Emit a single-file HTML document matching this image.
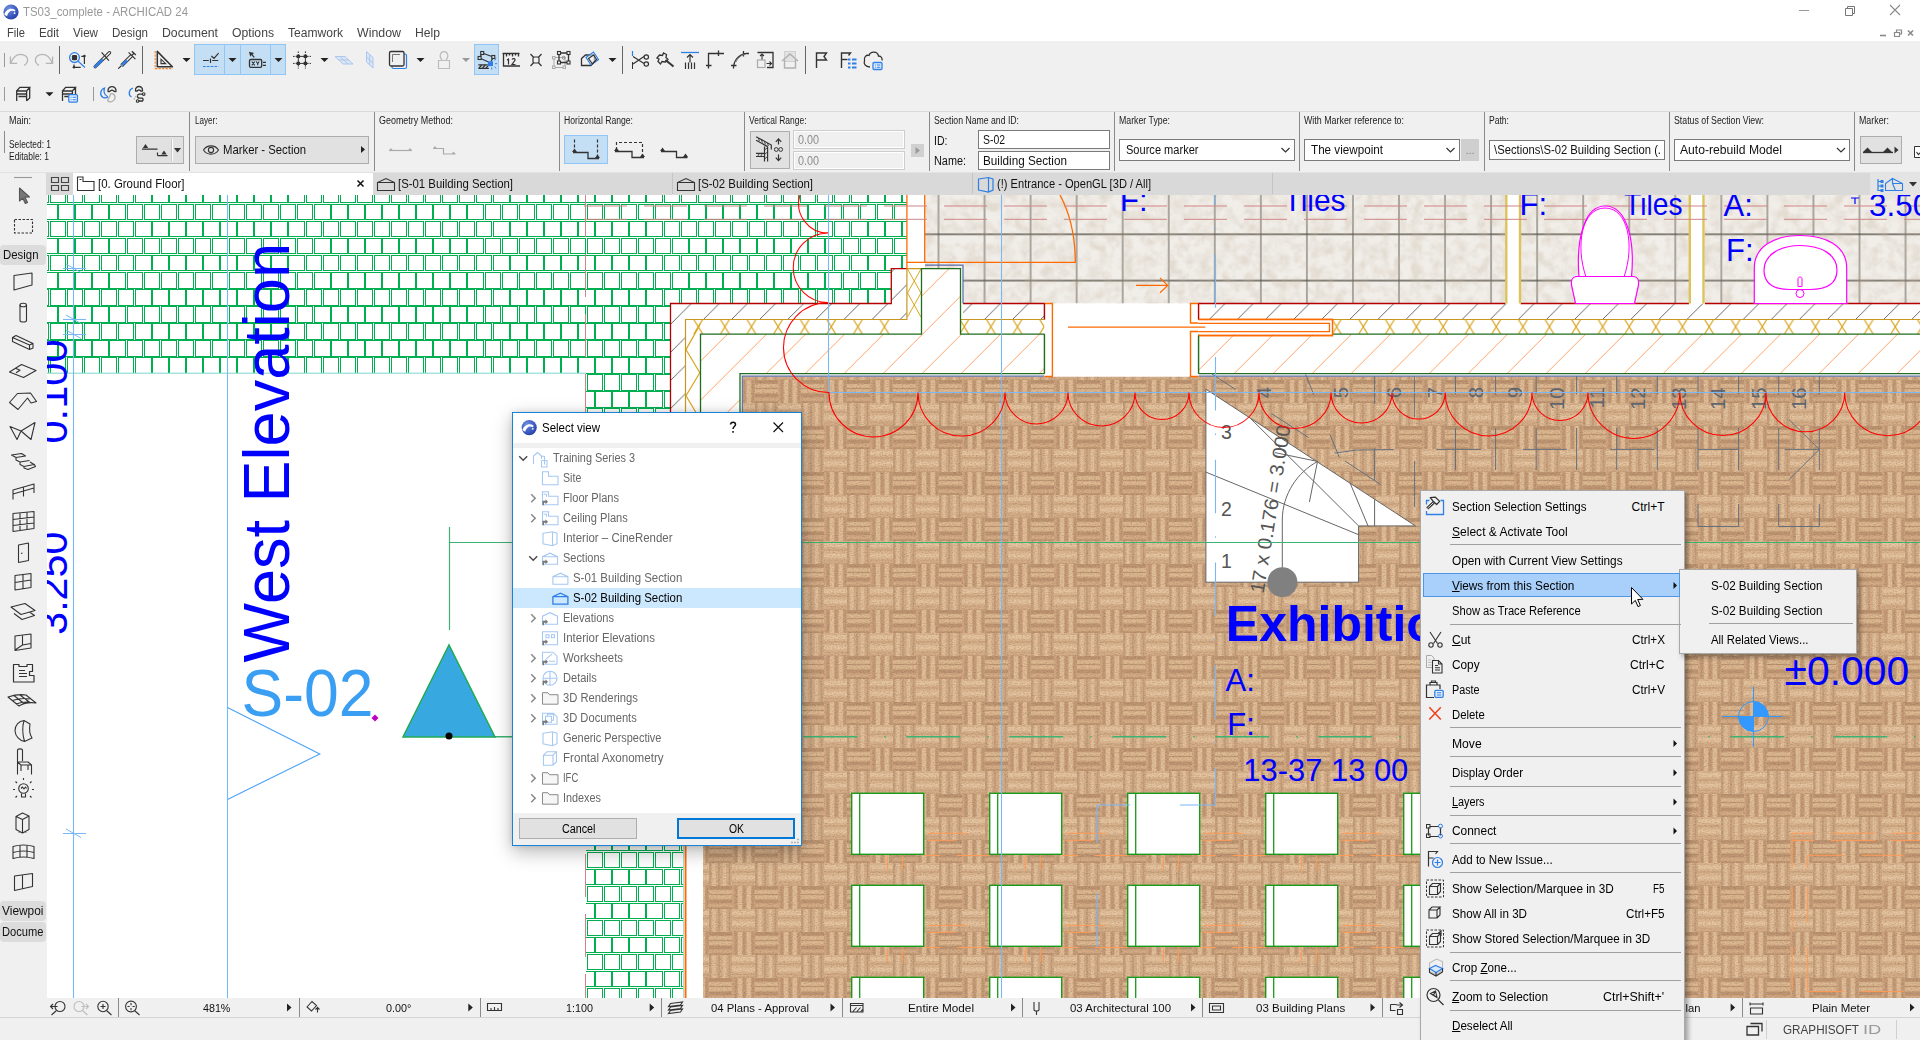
<!DOCTYPE html>
<html><head><meta charset="utf-8"><title>ARCHICAD</title>
<style>
html,body{margin:0;padding:0;background:#f0f0f0;overflow:hidden}
body{width:1920px;height:1040px;position:relative;font-family:"Liberation Sans",sans-serif;font-size:12px;color:#000}
.abs{position:absolute}
.t{position:absolute;white-space:nowrap;font-family:"Liberation Sans",sans-serif}
svg{display:block}
</style></head><body>

<div class="abs" style="left:0;top:0;width:1920px;height:41px;background:#fff"></div>
<svg class="abs" style="left:2px;top:3px" width="18" height="18" viewBox="0 0 18 18"><defs><radialGradient id="lg" cx="35%" cy="30%" r="80%"><stop offset="0" stop-color="#6f8fe0"/><stop offset="1" stop-color="#1f3aa8"/></radialGradient></defs><circle cx="9" cy="9" r="7.6" fill="url(#lg)"/><path d="M2.2 11.5 C4 6.5 9 4 13.6 7.2 L12.6 8.6 C9.5 6.6 6.2 8.4 5 13.2 Z" fill="#fff"/><circle cx="12.6" cy="10.2" r="0.9" fill="#fff"/></svg>
<span class="t" style="left:23.0px;top:4.0px;font-size:12px;line-height:16px;color:#999;transform:scaleX(0.9515);transform-origin:0 50%;">TS03_complete - ARCHICAD 24</span>
<svg class="abs" style="left:1790px;top:0" width="130" height="22" viewBox="0 0 130 22"><path d="M9 10.5h10" stroke="#999" stroke-width="1" fill="none"/><path d="M55.5 8.5h7v7h-7z M57.5 8.5v-2h7v7h-2" stroke="#777" stroke-width="1" fill="none"/><path d="M100 5l10 10M110 5l-10 10" stroke="#8a8a8a" stroke-width="1.1" fill="none"/></svg>
<span class="t" style="left:7.0px;top:25.0px;font-size:12px;line-height:16px;color:#444;transform:scaleX(0.9309);transform-origin:0 50%;">File</span>
<span class="t" style="left:39.0px;top:25.0px;font-size:12px;line-height:16px;color:#444;transform:scaleX(0.9672);transform-origin:0 50%;">Edit</span>
<span class="t" style="left:73.0px;top:25.0px;font-size:12px;line-height:16px;color:#444;transform:scaleX(0.9692);transform-origin:0 50%;">View</span>
<span class="t" style="left:112.0px;top:25.0px;font-size:12px;line-height:16px;color:#444;transform:scaleX(0.9637);transform-origin:0 50%;">Design</span>
<span class="t" style="left:162.0px;top:25.0px;font-size:12px;line-height:16px;color:#444;transform:scaleX(1.0239);transform-origin:0 50%;">Document</span>
<span class="t" style="left:232.0px;top:25.0px;font-size:12px;line-height:16px;color:#444;transform:scaleX(1.0156);transform-origin:0 50%;">Options</span>
<span class="t" style="left:288.0px;top:25.0px;font-size:12px;line-height:16px;color:#444;transform:scaleX(1.0058);transform-origin:0 50%;">Teamwork</span>
<span class="t" style="left:357.0px;top:25.0px;font-size:12px;line-height:16px;color:#444;transform:scaleX(1.0309);transform-origin:0 50%;">Window</span>
<span class="t" style="left:415.0px;top:25.0px;font-size:12px;line-height:16px;color:#444;transform:scaleX(1.0129);transform-origin:0 50%;">Help</span>
<svg class="abs" style="left:1876px;top:27px" width="44" height="12" viewBox="0 0 44 12"><path d="M4 8.5h6" stroke="#888" stroke-width="1.6"/><path d="M18.5 5.5h5v4h-5z M20.5 5v-2h5v4h-1.5" stroke="#888" stroke-width="1.2" fill="none"/><path d="M32 3.5l5 5M37 3.5l-5 5" stroke="#888" stroke-width="1.6"/></svg>
<div class="abs" style="left:0;top:41px;width:1920px;height:70px;background:#f0f0f0"></div>
<svg class="abs" style="left:0;top:0" width="1920" height="112" viewBox="0 0 1920 112" fill="none" stroke-linecap="butt">
<path d="M4.5 53v14" stroke="#999" stroke-width="1"/>
<path d="M59.5 46v28M142.5 46v28M622.5 46v28M805.5 46v28" stroke="#666" stroke-width="1"/>
<path d="M10.400 56.600V63.400H17.200" stroke="#b5b5b5" stroke-width="1.300"/><path d="M10.800 63C13 57.500 17 54.300 20.500 54.300C25 54.300 27.600 57 27.600 59.700C27.600 62.200 26 64.300 24 65.400" stroke="#b5b5b5" stroke-width="1.300"/>
<path d="M52.600 56.600V63.400H45.800" stroke="#b5b5b5" stroke-width="1.300"/><path d="M52.200 63C50 57.500 46 54.300 42.500 54.300C38 54.300 35.400 57 35.400 59.700C35.400 62.200 37 64.300 39 65.400" stroke="#b5b5b5" stroke-width="1.300"/>
<circle cx="74.500" cy="57.600" r="4.900" stroke="#2f7fe6" stroke-width="1.300"/><rect x="71.900" y="55" width="5.200" height="5.200" rx="1.300" fill="#333"/><path d="M78.200 61.200L84.900 67.500" stroke="#2f7fe6" stroke-width="1.200"/>
<path d="M84.400 56V63.900M81.300 56.300H84.400M74 67.300H80.700M74 64.500V67.300" stroke="#333" stroke-width="1.200"/><circle cx="84.400" cy="56" r="1.300" fill="#333"/><circle cx="74" cy="67.300" r="1.300" fill="#333"/>
<path d="M95.200 66.600L109.500 52.800" stroke="#333" stroke-width="3.400" stroke-linecap="round"/><path d="M95.200 66.600L109.500 52.800" stroke="#f0f0f0" stroke-width="1.400" stroke-linecap="round"/><path d="M95.300 66.500L101.800 60.200" stroke="#2f7fe6" stroke-width="2.600" stroke-linecap="round"/><path d="M101.600 52.400L108.900 60.700" stroke="#333" stroke-width="1.200"/>
<path d="M118.200 68.600L121.400 65.700" stroke="#333" stroke-width="1.200"/><path d="M121.600 65.600L132 55.300" stroke="#333" stroke-width="3.600"/><path d="M121.800 65.400L132 55.300" stroke="#f0f0f0" stroke-width="1.600"/><path d="M122 65.200L127 60.300" stroke="#2f7fe6" stroke-width="2.400"/><path d="M128.600 52.400L135.400 59.200M132.300 55L134.400 52.600M131.800 51.200L135.900 55" stroke="#333" stroke-width="1.200"/>
<path d="M157.300 51.400V66.800H172.400z" stroke="#333" stroke-width="1.500" stroke-linejoin="round"/><path d="M161 59.200V63.600H165.600z" stroke="#333" stroke-width="1.100"/><path d="M155.200 51V68.600H172.800" stroke="#f0802a" stroke-width="1.100" stroke-dasharray="2.200 1.300"/>
<path d="M182.5 58.0h8l-4 4z" fill="#222" stroke="none"/>
<rect x="194.5" y="44.500" width="91" height="30" fill="#c4def4" stroke="#90c6f5" stroke-width="1"/><path d="M224.500 44.500v30M240.500 44.500v30M270.500 44.500v30" stroke="#90c6f5" stroke-width="1"/>
<path d="M203 60.500h5.800M210.500 58.500v4.500M212.200 60.500h6M211.400 56l2.600 2.500 4.600-5.300" stroke="#333" stroke-width="1.200"/><path d="M203 66.500h15.500" stroke="#2f7fe6" stroke-width="1.200" stroke-dasharray="2.600 1.200"/>
<path d="M228.5 58.0h8l-4 4z" fill="#222" stroke="none"/>
<path d="M249 51.800l5.200 1.200-1.700 1.300 2.200 2.600-1 .8-2.200-2.600-1.300 1.700z" fill="#333" stroke="none"/><rect x="249.500" y="59.500" width="12.200" height="7.800" rx="1.300" stroke="#333" stroke-width="1.300"/><path d="M251.800 61.500l3 3.800M254.800 61.500l-3 3.800M256.200 61.500l1.500 2 1.500-2M257.700 63.500v1.800" stroke="#333" stroke-width="1.100"/><path d="M263 62.300h3M263 65.400h3" stroke="#333" stroke-width="1.200"/>
<path d="M274.5 58.0h8l-4 4z" fill="#222" stroke="none"/>
<path d="M293 56.400h4M307 56.400h4M293 63.400h4M307 63.400h4M298.300 51.400v3.500M298.300 65v3.600M305.400 51.400v3.500M305.400 65v3.600" stroke="#333" stroke-width="1" stroke-dasharray="1.600 1"/><path d="M298.300 56.400h7.100M298.300 63.400h7.100M298.300 56.400v7M305.400 56.400v7" stroke="#333" stroke-width="1"/><path d="M296.600 54.700h3.400v3.400h-3.400zM303.700 54.700h3.400v3.400h-3.400zM296.600 61.700h3.400v3.400h-3.400zM303.700 61.700h3.400v3.400h-3.400z" fill="#333"/>
<path d="M320.5 58.0h8l-4 4z" fill="#222" stroke="none"/>
<path d="M335 56.500h10l8 7.500h-10zM340 56.500l8 7.500M339 60h10" stroke="#a9c7ef" stroke-width="1" fill="#dde6f2"/>
<path d="M366.500 51.500l6.500 6v10.500l-6.500-6zM369.700 54.500v10.500M366.500 57l6.500 6" stroke="#a9c7ef" stroke-width="1" fill="#dde6f2"/>
<rect x="392" y="54" width="14.500" height="14.500" rx="1.500" stroke="#2f7fe6" stroke-width="1.200"/><rect x="389.500" y="51.500" width="14.500" height="14.500" rx="1.500" stroke="#333" stroke-width="1.300" fill="#f0f0f0"/><path d="M392.500 62v-7.500h7.500" stroke="#777" stroke-width="1"/>
<path d="M416.5 58.0h8l-4 4z" fill="#222" stroke="none"/>
<path d="M438.500 60.500h11v8h-11z" stroke="#bdbdbd" stroke-width="1.200"/><path d="M442 60C438.800 57 440 51.700 444 51.700C448 51.700 449.200 57 446 60" stroke="#bdbdbd" stroke-width="1.200"/>
<path d="M462.0 58.0h8l-4 4z" fill="#999" stroke="none"/>
<rect x="474.500" y="44.500" width="24" height="30" fill="#c4def4" stroke="#90c6f5" stroke-width="1"/>
<path d="M482.200 53L493.300 57L491 61.500M482.200 53L479.600 58L488.500 62" stroke="#333" stroke-width="1.200"/><g fill="#c4def4" stroke="#333" stroke-width="1.100"><rect x="480.700" y="51.500" width="3" height="3"/><rect x="491.800" y="55.500" width="3" height="3"/><rect x="478.100" y="56.500" width="3" height="3"/></g><rect x="488" y="61.300" width="5" height="4.800" fill="#2f7fe6"/><path d="M478.300 64.800h9.500M478.300 68.300h10.500" stroke="#333" stroke-width="1.300"/><path d="M479 68l2.800-3M482.500 68l2.800-3M486 68l2-2.200" stroke="#333" stroke-width="1.200"/><path d="M494.500 60.300l1.700-1.600M495 63.700h2M494.500 66.800l1.700 1.600M491.500 67.500l.3 2" stroke="#2f7fe6" stroke-width="1"/>
<path d="M502.500 53.500h17M503.500 53.500v12.500h16.500M506.500 53.500v3M509.500 53.500v2M512.500 53.500v3M515.500 53.500v2M518.500 53.500v3" stroke="#333" stroke-width="1.300"/><path d="M507 60l1.500-1v5.500M512 59.500c1-1.500 3.500-1 3 .8l-3 4.200h3.500" stroke="#333" stroke-width="1.200"/>
<path d="M530.500 54l11 12M541.500 54l-11 12" stroke="#333" stroke-width="1.200"/><rect x="533" y="57" width="6" height="6" rx="1.500" fill="#f0f0f0" stroke="#333" stroke-width="1.200"/>
<path d="M554 57.500h11v10h-11z" stroke="#aaa" stroke-width="1"/><rect x="552.500" y="56.500" width="2.500" height="2.500" stroke="#aaa" fill="#f0f0f0"/><rect x="552.500" y="66" width="2.500" height="2.500" stroke="#aaa" fill="#f0f0f0"/><rect x="563" y="66" width="2.500" height="2.500" stroke="#aaa" fill="#f0f0f0"/>
<path d="M559 53h9.500v9.500h-9.500z" stroke="#333" stroke-width="1.300"/><g fill="#f0f0f0" stroke="#333" stroke-width="1.100"><rect x="557.500" y="51.500" width="3" height="3"/><rect x="567" y="51.500" width="3" height="3"/><rect x="557.500" y="61" width="3" height="3"/><rect x="567" y="61" width="3" height="3"/></g><circle cx="563.700" cy="57.700" r="1.500" stroke="#888" stroke-width="1"/>
<path d="M581.500 58.500l4-3.500h9v6l-3.500 4.500h-9.500z" stroke="#333" stroke-width="1.300"/><path d="M586 57.500l7.500-5.500 5 7.500-7.500 5.500z" stroke="#2f7fe6" stroke-width="1.200" fill="#f0f0f0" fill-opacity=".6"/><path d="M588.500 58.500l5-3.500 3 4.500-4 4.500z" stroke="#333" stroke-width="1.200"/>
<path d="M608.5 58.0h8l-4 4z" fill="#222" stroke="none"/>
<path d="M632.500 51v5M632.500 62v7" stroke="#333" stroke-width="1"/><path d="M632.500 51v5" stroke="#2f7fe6" stroke-width="1.200"/><path d="M633 56.500l11 7M633 64l11-7.500" stroke="#333" stroke-width="1.200"/><circle cx="646.300" cy="57" r="2.200" stroke="#333" stroke-width="1.200"/><circle cx="646.300" cy="64" r="2.200" stroke="#333" stroke-width="1.200"/>
<path d="M657 58l2.500-3 3 .5 1-2.500 3 1.500-.5 3 2 2-2.500 2.500-3.500-.5-1.500 2.500-2.500-2.500 1-2.500z" stroke="#333" stroke-width="1.300"/><path d="M665.500 60l8 6.500" stroke="#333" stroke-width="2"/>
<path d="M681 52.500h18" stroke="#2f7fe6" stroke-width="1.300"/><path d="M690 54.500v8M687 57.500l3-3 3 3" stroke="#333" stroke-width="1.200"/><path d="M685.500 62.500v6.500M688.500 62.500v6.500M691.500 62.500v6.500M694.500 62.500v6.500" stroke="#333" stroke-width="1.200"/>
<path d="M708.500 68.500v-15h15.500M718.500 50.500v5.500M706 65.500h5.500" stroke="#333" stroke-width="1.300"/>
<path d="M733.500 68.500c0-8 5-14 13-15M743.500 51v5.500M731 65.500h5.500M746 53.500h3" stroke="#333" stroke-width="1.300"/><path d="M736 62c1.500-3.500 4-6 8-7.500" stroke="#888" stroke-width="1"/>
<path d="M757.500 52.500h15.500v15h-6" stroke="#333" stroke-width="1.300"/><rect x="757.500" y="60" width="7.500" height="7.500" stroke="#aaa" stroke-width="1.200"/><path d="M762 59.500v-5.500M760 56l2-2 2 2M766.500 63.500h5M769.500 61.500l2 2-2 2" stroke="#333" stroke-width="1.100"/>
<rect x="784.500" y="51.500" width="11" height="10" fill="#e2e2e2" stroke="#d0d0d0"/><path d="M782 61l8-7 8 7M784.500 60v8h11v-8" stroke="#b0b0b0" stroke-width="1.400"/>
<path d="M816.500 68v-15h10l-2.500 3.500 2.500 3.500h-10" stroke="#333" stroke-width="1.400"/>
<path d="M841.500 68v-15h9l-2 2.500" stroke="#333" stroke-width="1.400"/><path d="M841.500 59.500h6" stroke="#333" stroke-width="1.400"/><path d="M848 59.500h2.500M852 59.500h4.500M848 63.500h2.500M852 63.500h4.500M848 67.500h2.500M852 67.500h4.500" stroke="#2f7fe6" stroke-width="2"/>
<path d="M870 67c-5 0-6.500-3.500-5.500-6-1-4 2-6.500 4.500-5.500 1.500-4.500 8.500-4.500 9.500.5 3 0 4 2.500 3.500 4.500" stroke="#333" stroke-width="1.300"/><rect x="873" y="62.500" width="9" height="7" rx="1" fill="#e9f1fc" stroke="#2f7fe6" stroke-width="1.300"/><path d="M874.800 65h1M876.800 65h3.500M874.800 67.300h1M876.800 67.300h3.500" stroke="#2f7fe6" stroke-width="1.100"/>
<path d="M4.500 87v14M93.500 87v14" stroke="#999" stroke-width="1"/>
<path d="M16.7 100.900V91H26.6V100.900M16.7 91L19.8 87.300H29.7L26.6 91M29.7 87.300V98L26.6 100.900M16.7 94H26.6M18.5 96.500H26.6" stroke="#333" stroke-width="1.300"/>
<path d="M45.5 92.2h8l-4 4z" fill="#222" stroke="none"/>
<path d="M62.5 100.900V91H72.4V100.900M62.5 91L65.6 87.300H75.5L72.4 91M75.5 87.300V98L72.4 100.900M62.5 94H72.4M64.3 96.500H72.4" stroke="#333" stroke-width="1.300"/>
<rect x="68.800" y="94.700" width="8.600" height="7.400" rx="1" fill="#e9f1fc" stroke="#2f7fe6" stroke-width="1.300"/><path d="M70.600 97.300h1M72.600 97.300h3.300M70.600 99.700h1M72.600 99.700h3.300" stroke="#2f7fe6" stroke-width="1.100"/>
<path d="M104.500 88C100 89.500 99.500 95.500 103 97.300C105.500 98.500 107.800 97.500 107.500 96.500C104.500 95 103.500 91.500 104.500 88z" stroke="#2f7fe6" stroke-width="1.300"/>
<path d="M108 91C107.500 85.200 116.500 85.200 116 91C115.800 92 114.500 91.800 113.500 90.800C112.500 90 111.500 90 110.500 90.800C109.500 91.800 108.200 92 108 91z" stroke="#333" stroke-width="1.300"/>
<path d="M110.500 94C113 92.800 115.500 95 115 98C114.500 101.500 110 102.800 108 101C106.500 99.500 110 98 110.500 94z" stroke="#aaa" stroke-width="1.300"/>
<path d="M133 88C128.600 89.500 128 95 131.500 97" stroke="#2f7fe6" stroke-width="1.300"/>
<path d="M135.500 90.500C135 85.200 143 85.200 142.500 90.500C142.300 91.500 141 91.300 140.300 90.500C139.500 89.700 138.500 89.700 137.700 90.500C137 91.300 135.700 91.500 135.500 90.500z" stroke="#333" stroke-width="1.300"/>
<path d="M142.300 94.100H139.500A2 2 0 0 0 139.500 98.200H142.500A1.900 1.900 0 0 1 142.500 101H139" stroke="#333" stroke-width="1.300"/><circle cx="143.700" cy="94.100" r="1.300" stroke="#333" stroke-width="1.100"/><circle cx="137.600" cy="101" r="1.300" stroke="#333" stroke-width="1.100"/><path d="M134 99.500C135 97 136.500 95.500 137.500 95" stroke="#aaa" stroke-width="1.100" stroke-dasharray="1.500 1"/>
</svg>
<div class="abs" style="left:0;top:111px;width:1920px;height:61px;background:#f0f0f0;border-top:1px solid #dadada"></div>
<div class="abs" style="left:189px;top:112px;width:1px;height:59px;background:#8a8a8a"></div>
<div class="abs" style="left:374px;top:112px;width:1px;height:59px;background:#8a8a8a"></div>
<div class="abs" style="left:559px;top:112px;width:1px;height:59px;background:#8a8a8a"></div>
<div class="abs" style="left:744px;top:112px;width:1px;height:59px;background:#8a8a8a"></div>
<div class="abs" style="left:929px;top:112px;width:1px;height:59px;background:#8a8a8a"></div>
<div class="abs" style="left:1114px;top:112px;width:1px;height:59px;background:#8a8a8a"></div>
<div class="abs" style="left:1299px;top:112px;width:1px;height:59px;background:#8a8a8a"></div>
<div class="abs" style="left:1484px;top:112px;width:1px;height:59px;background:#8a8a8a"></div>
<div class="abs" style="left:1669px;top:112px;width:1px;height:59px;background:#8a8a8a"></div>
<div class="abs" style="left:1854px;top:112px;width:1px;height:59px;background:#8a8a8a"></div>
<div class="abs" style="left:4px;top:131px;width:1px;height:22px;background:#8a8a8a"></div>
<span class="t" style="left:9.0px;top:113.5px;font-size:10px;line-height:14px;color:#222;transform:scaleX(0.8997);transform-origin:0 50%;">Main:</span>
<span class="t" style="left:194.5px;top:113.5px;font-size:10px;line-height:14px;color:#222;transform:scaleX(0.8095);transform-origin:0 50%;">Layer:</span>
<span class="t" style="left:379.0px;top:113.5px;font-size:10px;line-height:14px;color:#222;transform:scaleX(0.8936);transform-origin:0 50%;">Geometry Method:</span>
<span class="t" style="left:564.0px;top:113.5px;font-size:10px;line-height:14px;color:#222;transform:scaleX(0.8620);transform-origin:0 50%;">Horizontal Range:</span>
<span class="t" style="left:749.0px;top:113.5px;font-size:10px;line-height:14px;color:#222;transform:scaleX(0.8478);transform-origin:0 50%;">Vertical Range:</span>
<span class="t" style="left:934.0px;top:113.5px;font-size:10px;line-height:14px;color:#222;transform:scaleX(0.8689);transform-origin:0 50%;">Section Name and ID:</span>
<span class="t" style="left:1119.0px;top:113.5px;font-size:10px;line-height:14px;color:#222;transform:scaleX(0.8767);transform-origin:0 50%;">Marker Type:</span>
<span class="t" style="left:1304.0px;top:113.5px;font-size:10px;line-height:14px;color:#222;transform:scaleX(0.8864);transform-origin:0 50%;">With Marker reference to:</span>
<span class="t" style="left:1489.0px;top:113.5px;font-size:10px;line-height:14px;color:#222;transform:scaleX(0.8565);transform-origin:0 50%;">Path:</span>
<span class="t" style="left:1674.0px;top:113.5px;font-size:10px;line-height:14px;color:#222;transform:scaleX(0.8767);transform-origin:0 50%;">Status of Section View:</span>
<span class="t" style="left:1859.0px;top:113.5px;font-size:10px;line-height:14px;color:#222;transform:scaleX(0.8851);transform-origin:0 50%;">Marker:</span>
<span class="t" style="left:9.0px;top:138.0px;font-size:10px;line-height:14px;color:#222;transform:scaleX(0.8394);transform-origin:0 50%;">Selected: 1</span>
<span class="t" style="left:9.0px;top:149.5px;font-size:10px;line-height:14px;color:#222;transform:scaleX(0.8464);transform-origin:0 50%;">Editable: 1</span>
<div class="abs" style="left:136px;top:136px;width:48px;height:28px;background:#e1e1e1;border:1px solid #adadad;box-sizing:border-box"></div>
<div class="abs" style="left:195px;top:136px;width:174px;height:28px;background:#e1e1e1;border:1px solid #adadad;box-sizing:border-box"></div>
<span class="t" style="left:222.5px;top:142.0px;font-size:12px;line-height:16px;color:#111;transform:scaleX(0.9429);transform-origin:0 50%;">Marker - Section</span>
<div class="abs" style="left:564px;top:135px;width:44px;height:29px;background:#c4def4;border:1px solid #90c6f5;box-sizing:border-box"></div>
<div class="abs" style="left:750px;top:131px;width:40px;height:38px;background:#e1e1e1;border:1px solid #adadad;box-sizing:border-box"></div>
<div class="abs" style="left:793px;top:130px;width:111.5px;height:18.5px;background:#f0f0f0;box-shadow:inset 0 0 0 1px #fff;border:1px solid #cdcdcd;box-sizing:border-box"></div>
<div class="abs" style="left:793px;top:151px;width:111.5px;height:18.5px;background:#f0f0f0;box-shadow:inset 0 0 0 1px #fff;border:1px solid #cdcdcd;box-sizing:border-box"></div>
<span class="t" style="left:797.5px;top:132.0px;font-size:12px;line-height:16px;color:#8c8c8c;transform:scaleX(0.8991);transform-origin:0 50%;">0.00</span>
<span class="t" style="left:797.5px;top:153.0px;font-size:12px;line-height:16px;color:#8c8c8c;transform:scaleX(0.8991);transform-origin:0 50%;">0.00</span>
<div class="abs" style="left:911px;top:144px;width:13px;height:13px;background:#d0d0d0;border:1px solid #d0d0d0;box-sizing:border-box"></div>
<span class="t" style="left:934.0px;top:132.5px;font-size:12px;line-height:16px;color:#111;transform:scaleX(0.8804);transform-origin:0 50%;">ID:</span>
<span class="t" style="left:934.0px;top:153.0px;font-size:12px;line-height:16px;color:#111;transform:scaleX(0.9054);transform-origin:0 50%;">Name:</span>
<div class="abs" style="left:978px;top:130px;width:132px;height:19px;background:#fff;border:1px solid #7a7a7a;box-sizing:border-box"></div>
<div class="abs" style="left:978px;top:151px;width:132px;height:19px;background:#fff;border:1px solid #7a7a7a;box-sizing:border-box"></div>
<span class="t" style="left:982.5px;top:132.0px;font-size:12px;line-height:16px;color:#111;transform:scaleX(0.8679);transform-origin:0 50%;">S-02</span>
<span class="t" style="left:982.5px;top:153.0px;font-size:12px;line-height:16px;color:#111;transform:scaleX(0.9761);transform-origin:0 50%;">Building Section</span>
<div class="abs" style="left:1119px;top:139px;width:175.5px;height:22px;background:#fff;border:1px solid #7a7a7a;box-sizing:border-box"></div>
<span class="t" style="left:1126.0px;top:142.0px;font-size:12px;line-height:16px;color:#111;transform:scaleX(0.9213);transform-origin:0 50%;">Source marker</span>
<div class="abs" style="left:1304px;top:139px;width:155.5px;height:22px;background:#fff;border:1px solid #7a7a7a;box-sizing:border-box"></div>
<span class="t" style="left:1311.0px;top:142.0px;font-size:12px;line-height:16px;color:#111;transform:scaleX(0.9724);transform-origin:0 50%;">The viewpoint</span>
<div class="abs" style="left:1461px;top:139px;width:18px;height:22px;background:#cfcfcf;border:1px solid #cfcfcf;box-sizing:border-box"></div>
<span class="t" style="left:1465.5px;top:142.5px;font-size:11px;line-height:15px;color:#888;">...</span>
<div class="abs" style="left:1489px;top:140px;width:175.5px;height:19.5px;background:#fff;border:1px solid #7a7a7a;box-sizing:border-box"></div>
<span class="t" style="left:1494.0px;top:142.0px;font-size:12px;line-height:16px;color:#111;transform:scaleX(0.9377);transform-origin:0 50%;white-space:pre;">\Sections\S-02 Building Section (.</span>
<div class="abs" style="left:1674px;top:139px;width:175.5px;height:22px;background:#fff;border:1px solid #7a7a7a;box-sizing:border-box"></div>
<span class="t" style="left:1680.0px;top:142.0px;font-size:12px;line-height:16px;color:#111;transform:scaleX(1.0126);transform-origin:0 50%;">Auto-rebuild Model</span>
<div class="abs" style="left:1860px;top:136px;width:42px;height:28px;background:#e1e1e1;border:1px solid #adadad;box-sizing:border-box"></div>
<svg class="abs" style="left:0;top:111px" width="1920" height="62" viewBox="0 111 1920 62" fill="none">
<path d="M172.500 139v22" stroke="#fdfdfd"/><path d="M171.500 139v22" stroke="#c8c8c8"/><path d="M142 149.200h15.500M157.500 155.700h10M157.500 152.500v3" stroke="#333" stroke-width="1.200"/><path d="M142.800 148l2.700-4 2.700 4zM161.300 154.500l2.700-4 2.700 4z" fill="#333"/><path d="M174 148h7l-3.500 4.500z" fill="#333"/>
<path d="M203.500 150c3.500-5.500 11.500-5.500 15 0-3.500 5.500-11.500 5.500-15 0z" stroke="#333" stroke-width="1.100"/><circle cx="211" cy="150" r="2.600" stroke="#333" stroke-width="1.100"/>
<path d="M361 146l4 3.500-4 3.500z" fill="#222"/>
<path d="M389 150.500h23" stroke="#aaa" stroke-width="1.200"/><path d="M389 150.500l2-2.500 2 2.500zM408 150.500l2-2.500 2 2.500z" fill="#aaa"/>
<path d="M433 148.500h10.500v5.500h12" stroke="#aaa" stroke-width="1.200"/><path d="M433 148.500l2-2.500 2 2.500zM451.500 154l2-2.500 2 2.500z" fill="#aaa"/>
<path d="M574.500 139.500v11M597.500 139.500v18" stroke="#333" stroke-width="1.200" stroke-dasharray="3 2"/><path d="M573 152.500h15v6h11" stroke="#333" stroke-width="1.300"/><path d="M572 152l2.500-3.500 2.500 3.500zM595 158l2.500-3.500 2.500 3.500z" fill="#333"/>
<path d="M616.500 150v-7.500h26v14" stroke="#333" stroke-width="1.200" stroke-dasharray="3 2"/><path d="M615 151.500h17v6h12" stroke="#333" stroke-width="1.300"/><path d="M614 151l2.500-3.500 2.500 3.500zM640 157l2.500-3.500 2.500 3.500z" fill="#333"/>
<path d="M661 151.500h15.500v6h11" stroke="#333" stroke-width="1.300"/><path d="M660 151l2.500-3.500 2.500 3.500zM683 157l2.500-3.500 2.500 3.500z" fill="#333"/>
<path d="M756.100 136.700L771.300 145V149.500M756.100 140.300L767.600 146.600M764.500 146.500V161.500M767.600 146.600V161.500M756 153.300H764.500M756 156.500H764.500" stroke="#333" stroke-width="1.200"/><path d="M758.500 138l.8 3M761.500 139.700l.8 3M764.500 141.300l.8 3M767.500 143l.8 3M764.500 150l3-2.500M764.500 154.500l3-2.500M764.500 159l3-2.500M757.500 156.500l2-3.200M760.500 156.500l2-3.200" stroke="#333" stroke-width=".9"/>
<path d="M778.500 139V144.500M775.800 141.800L778.500 138.800L781.200 141.800M778.500 154.400V160.400M775.800 157.600L778.500 160.600L781.200 157.600" stroke="#333" stroke-width="1.200"/><circle cx="776.300" cy="149.500" r="1.900" stroke="#333" stroke-width="1"/><circle cx="780.700" cy="149.500" r="1.900" stroke="#333" stroke-width="1"/>
<path d="M915.500 147l4.500 3.500-4.500 3.500z" fill="#999"/>
<path d="M1281.5 148l4 4 4-4" stroke="#333" stroke-width="1.200"/>
<path d="M1446.5 148l4 4 4-4" stroke="#333" stroke-width="1.200"/>
<path d="M1837 148l4 4 4-4" stroke="#333" stroke-width="1.200"/>
<path d="M1863 152.500h30" stroke="#333" stroke-width="1.300"/><path d="M1863 152l4.500-4.500 4.500 4.500zM1883 152l4.500-4.500 4.500 4.500z" fill="#333"/><path d="M1894.500 146.500l4 3.500-4 3.500z" fill="#333"/>
<path d="M1914.500 146.500h6v11h-6z" stroke="#333" fill="#fff"/><path d="M1916.500 152l2 2.500 2-2" stroke="#333" stroke-width="1.200"/>
</svg>
<div class="abs" style="left:0;top:172px;width:1920px;height:1px;background:#e2e2e2"></div>
<div class="abs" style="left:0;top:173px;width:1920px;height:22px;background:#d9d9d9"></div>
<div class="abs" style="left:0;top:173px;width:46px;height:870px;background:#f0f0f0"></div>
<div class="abs" style="left:73px;top:173px;width:300px;height:22px;background:#fff"></div>
<div class="abs" style="left:1870px;top:173px;width:50px;height:22px;background:#e4e4e4"></div>
<div class="abs" style="left:672px;top:173px;width:1px;height:21px;background:#c4c4c4"></div>
<div class="abs" style="left:972px;top:173px;width:1px;height:21px;background:#c4c4c4"></div>
<div class="abs" style="left:1272px;top:173px;width:1px;height:21px;background:#c4c4c4"></div>
<span class="t" style="left:97.5px;top:175.5px;font-size:12px;line-height:16px;color:#111;transform:scaleX(0.9536);transform-origin:0 50%;">[0. Ground Floor]</span>
<span class="t" style="left:397.5px;top:175.5px;font-size:12px;line-height:16px;color:#111;transform:scaleX(0.9472);transform-origin:0 50%;">[S-01 Building Section]</span>
<span class="t" style="left:697.5px;top:175.5px;font-size:12px;line-height:16px;color:#111;transform:scaleX(0.9472);transform-origin:0 50%;">[S-02 Building Section]</span>
<span class="t" style="left:997.0px;top:175.5px;font-size:12px;line-height:16px;color:#111;transform:scaleX(0.9261);transform-origin:0 50%;">(!) Entrance - OpenGL [3D / All]</span>
<svg class="abs" style="left:0;top:172px" width="1920" height="23" viewBox="0 172 1920 23" fill="none">
<path d="M51.500 177.500h7v5h-7zM61.500 177.500h7v5h-7zM51.500 185.500h7v5h-7zM61.500 185.500h7v5h-7z" stroke="#444" stroke-width="1.100"/>
<path d="M77.500 190.500v-13.500h5.500v4.500h11v9z" stroke="#333" stroke-width="1.100"/><path d="M79.500 179.500h2" stroke="#333" stroke-width="1"/>
<path d="M357.500 180.500l6 6M363.500 180.500l-6 6" stroke="#111" stroke-width="1.500"/>
<path d="M377.5 190.500v-8l8.500-4 8.500 4v8zM377.5 182.500h17" stroke="#333" stroke-width="1.100"/>
<path d="M677.5 190.500v-8l8.500-4 8.500 4v8zM677.5 182.500h17" stroke="#333" stroke-width="1.100"/>
<path d="M978.500 179l10-1.500 4.500 1.500v11l-4.500 2-10-2zM988.500 177.500v14.500" stroke="#2f7fe6" stroke-width="1.200"/>
<path d="M1878 179v12M1878 181.500h4M1878 186h4M1878 190.500h4" stroke="#2f7fe6" stroke-width="1.200"/><path d="M1880.500 180h3v3h-3zM1880.500 184.500h3v3h-3zM1880.500 189h3v3h-3z" fill="#2f7fe6"/><path d="M1885.500 190.500v-7l7-5 10 5v7zM1892.500 178.500v5M1892.500 183.500l3 7M1892.500 183.500h10" stroke="#2f7fe6" stroke-width="1.100"/>
<path d="M1909 182h8l-4 4.500z" fill="#333"/>
</svg>
<svg class="abs" style="left:47px;top:195px;background:#fff" width="1873" height="803" viewBox="47 195 1873 803" fill="none" font-family="Liberation Sans, sans-serif">
<defs>
<pattern id="brick" patternUnits="userSpaceOnUse" x="101" y="187" width="17" height="34">
<rect width="17" height="34" fill="#fff"/>
<g stroke="#00b050" stroke-width="1" fill="none" shape-rendering="crispEdges"><rect x=".5" y=".5" width="15" height="15"/><rect x="9.500" y="17.500" width="15" height="15"/><rect x="-7.500" y="17.500" width="15" height="15"/></g>
</pattern>
<pattern id="brick2" patternUnits="userSpaceOnUse" x="101" y="189" width="17" height="34">
<rect width="17" height="34" fill="#fff"/>
<g stroke="#00b050" stroke-width="1" fill="none" shape-rendering="crispEdges"><rect x=".5" y=".5" width="15" height="15"/><rect x="9.500" y="17.500" width="15" height="15"/><rect x="-7.500" y="17.500" width="15" height="15"/></g>
</pattern>
<pattern id="wood" patternUnits="userSpaceOnUse" x="42" y="12" width="46" height="46">
<rect width="46" height="46" fill="#d3aa84"/>
<rect x="0" y="0" width="23" height="23" fill="#d2a984"/>
<path d="M8 0v23M16.800 0v23" stroke="#e1bf99" stroke-width="4"/><path d="M3.800 0v23M12.300 0v23M21 0v23" stroke="#c39b78" stroke-width="2.800"/>
<rect x="23" y="0" width="23" height="23" fill="#cda57f"/>
<path d="M23 1.800h23" stroke="#bd9573" stroke-width="3.400"/><path d="M23 6h23M23 11h23" stroke="#deba93" stroke-width="3.600"/><path d="M23 8.500h23" stroke="#c09875" stroke-width="1"/><path d="M23 15.500h23" stroke="#bf9775" stroke-width="3"/><path d="M23 19.500h23" stroke="#d6af89" stroke-width="2.500"/><path d="M23 22.200h23" stroke="#bf9774" stroke-width="1.600"/>
<rect x="0" y="23" width="23" height="23" fill="#dbb791"/>
<path d="M0 27h23M0 37.500h23" stroke="#e5c4a0" stroke-width="4"/><path d="M0 32h23M0 42.500h23" stroke="#d1aa85" stroke-width="1.800"/><path d="M0 45.300h23" stroke="#cca580" stroke-width="1.400"/>
<rect x="23" y="23" width="23" height="23" fill="#d5af8a"/>
<path d="M28 23v23M38.500 23v23" stroke="#e2c19c" stroke-width="3.500"/><path d="M33 23v23M43.500 23v23M24 23v23" stroke="#c59e7b" stroke-width="1.600"/>
</pattern>
<filter id="grain" x="0" y="0" width="100%" height="100%" color-interpolation-filters="sRGB"><feTurbulence type="fractalNoise" baseFrequency="0.55 0.9" numOctaves="2" seed="7"/><feColorMatrix type="matrix" values="0 0 0 0 0.42  0 0 0 0 0.27  0 0 0 0 0.17  1.1 1.1 1.1 0 -1.45"/></filter>
<filter id="grain2" x="0" y="0" width="100%" height="100%" color-interpolation-filters="sRGB"><feTurbulence type="fractalNoise" baseFrequency="0.09" numOctaves="3" seed="11"/><feColorMatrix type="matrix" values="0 0 0 0 0.78  0 0 0 0 0.72  0 0 0 0 0.64  1.4 1.4 1.4 0 -1.75"/></filter>
<pattern id="tile" patternUnits="userSpaceOnUse" x="938.5" y="234.3" width="46.05" height="46.3">
<rect width="46.05" height="46.3" fill="#f1eee9"/>
<path d="M0 0v46.300M46.050 0v46.300" stroke="#6f6b62" stroke-width="1.100"/><path d="M0 0h46.050M0 46.300h46.050" stroke="#5d594f" stroke-width="1.400"/>
</pattern>
<pattern id="hg" patternUnits="userSpaceOnUse" x="1450" y="303.5" width="28.1" height="28.1"><path d="M-1 29.100l30.100-30.100M-1 1l2-2M27.100 29.100l2-2" stroke="#555" stroke-width=".9"/></pattern>
<pattern id="ho" patternUnits="userSpaceOnUse" x="1468.700" y="295" width="39" height="39"><path d="M-1 40l41-41M-1 1l2-2M38 40l2-2" stroke="#ff9a57" stroke-width=".9"/></pattern>
<pattern id="hx" patternUnits="userSpaceOnUse" x="1456.700" y="319.5" width="26.6" height="14.6"><path d="M8.500 0l9 14.600M17.500 0l-9 14.600" stroke="#d9a520" stroke-width="1.250"/></pattern>
<pattern id="hxv" patternUnits="userSpaceOnUse" x="685.5" y="300" width="15" height="26.6"><path d="M0 8.500l15 9M0 17.500l15-9" stroke="#d9a520" stroke-width="1"/></pattern>
<clipPath id="cv"><rect x="47" y="195" width="1873" height="803"/></clipPath>
<clipPath id="wc"><path d="M743 376.500H1920V998H703V500H743z"/></clipPath>
</defs>
<g clip-path="url(#cv)">
<clipPath id="bc1"><path d="M47 195H906.900V268.600H891.300V303.500H670.500V373H47z"/></clipPath>
<clipPath id="bc2"><path d="M586 373H670.500V500H683.400V998H586z"/></clipPath>
<path clip-path="url(#bc1)" d="M33.5 187.5h15v15h-15zM50.5 187.5h15v15h-15zM67.5 187.5h15v15h-15zM84.5 187.5h15v15h-15zM101.5 187.5h15v15h-15zM118.5 187.5h15v15h-15zM135.5 187.5h16v15h-16zM152.5 187.5h16v15h-16zM169.5 187.5h16v15h-16zM186.5 187.5h16v15h-16zM203.5 187.5h16v15h-16zM220.5 187.5h16v15h-16zM237.5 187.5h16v15h-16zM254.5 187.5h16v15h-16zM271.5 187.5h16v15h-16zM288.5 187.5h16v15h-16zM306.5 187.5h15v15h-15zM323.5 187.5h15v15h-15zM340.5 187.5h15v15h-15zM357.5 187.5h15v15h-15zM374.5 187.5h15v15h-15zM391.5 187.5h15v15h-15zM408.5 187.5h15v15h-15zM425.5 187.5h15v15h-15zM442.5 187.5h15v15h-15zM459.5 187.5h15v15h-15zM476.5 187.5h15v15h-15zM493.5 187.5h16v15h-16zM510.5 187.5h16v15h-16zM527.5 187.5h16v15h-16zM544.5 187.5h16v15h-16zM561.5 187.5h16v15h-16zM578.5 187.5h16v15h-16zM595.5 187.5h16v15h-16zM612.5 187.5h16v15h-16zM629.5 187.5h16v15h-16zM646.5 187.5h16v15h-16zM664.5 187.5h15v15h-15zM681.5 187.5h15v15h-15zM698.5 187.5h15v15h-15zM715.5 187.5h15v15h-15zM732.5 187.5h15v15h-15zM749.5 187.5h15v15h-15zM766.5 187.5h15v15h-15zM783.5 187.5h15v15h-15zM800.5 187.5h15v15h-15zM817.5 187.5h15v15h-15zM834.5 187.5h15v15h-15zM851.5 187.5h16v15h-16zM868.5 187.5h16v15h-16zM885.5 187.5h16v15h-16zM902.5 187.5h16v15h-16zM41.5 204.5h16v15h-16zM58.5 204.5h16v15h-16zM75.5 204.5h16v15h-16zM92.5 204.5h16v15h-16zM109.5 204.5h16v15h-16zM127.5 204.5h15v15h-15zM144.5 204.5h15v15h-15zM161.5 204.5h15v15h-15zM178.5 204.5h15v15h-15zM195.5 204.5h15v15h-15zM212.5 204.5h15v15h-15zM229.5 204.5h15v15h-15zM246.5 204.5h15v15h-15zM263.5 204.5h15v15h-15zM280.5 204.5h15v15h-15zM297.5 204.5h15v15h-15zM314.5 204.5h16v15h-16zM331.5 204.5h16v15h-16zM348.5 204.5h16v15h-16zM365.5 204.5h16v15h-16zM382.5 204.5h16v15h-16zM399.5 204.5h16v15h-16zM416.5 204.5h16v15h-16zM433.5 204.5h16v15h-16zM450.5 204.5h16v15h-16zM467.5 204.5h16v15h-16zM485.5 204.5h15v15h-15zM502.5 204.5h15v15h-15zM519.5 204.5h15v15h-15zM536.5 204.5h15v15h-15zM553.5 204.5h15v15h-15zM570.5 204.5h15v15h-15zM587.5 204.5h15v15h-15zM604.5 204.5h15v15h-15zM621.5 204.5h15v15h-15zM638.5 204.5h15v15h-15zM655.5 204.5h15v15h-15zM672.5 204.5h16v15h-16zM689.5 204.5h16v15h-16zM706.5 204.5h16v15h-16zM723.5 204.5h16v15h-16zM740.5 204.5h16v15h-16zM757.5 204.5h16v15h-16zM774.5 204.5h16v15h-16zM791.5 204.5h16v15h-16zM808.5 204.5h16v15h-16zM825.5 204.5h16v15h-16zM843.5 204.5h15v15h-15zM860.5 204.5h15v15h-15zM877.5 204.5h15v15h-15zM894.5 204.5h15v15h-15zM33.5 221.5h15v15h-15zM50.5 221.5h15v15h-15zM67.5 221.5h15v15h-15zM84.5 221.5h15v15h-15zM101.5 221.5h15v15h-15zM118.5 221.5h15v15h-15zM135.5 221.5h16v15h-16zM152.5 221.5h16v15h-16zM169.5 221.5h16v15h-16zM186.5 221.5h16v15h-16zM203.5 221.5h16v15h-16zM220.5 221.5h16v15h-16zM237.5 221.5h16v15h-16zM254.5 221.5h16v15h-16zM271.5 221.5h16v15h-16zM288.5 221.5h16v15h-16zM306.5 221.5h15v15h-15zM323.5 221.5h15v15h-15zM340.5 221.5h15v15h-15zM357.5 221.5h15v15h-15zM374.5 221.5h15v15h-15zM391.5 221.5h15v15h-15zM408.5 221.5h15v15h-15zM425.5 221.5h15v15h-15zM442.5 221.5h15v15h-15zM459.5 221.5h15v15h-15zM476.5 221.5h15v15h-15zM493.5 221.5h16v15h-16zM510.5 221.5h16v15h-16zM527.5 221.5h16v15h-16zM544.5 221.5h16v15h-16zM561.5 221.5h16v15h-16zM578.5 221.5h16v15h-16zM595.5 221.5h16v15h-16zM612.5 221.5h16v15h-16zM629.5 221.5h16v15h-16zM646.5 221.5h16v15h-16zM664.5 221.5h15v15h-15zM681.5 221.5h15v15h-15zM698.5 221.5h15v15h-15zM715.5 221.5h15v15h-15zM732.5 221.5h15v15h-15zM749.5 221.5h15v15h-15zM766.5 221.5h15v15h-15zM783.5 221.5h15v15h-15zM800.5 221.5h15v15h-15zM817.5 221.5h15v15h-15zM834.5 221.5h15v15h-15zM851.5 221.5h16v15h-16zM868.5 221.5h16v15h-16zM885.5 221.5h16v15h-16zM902.5 221.5h16v15h-16zM41.5 238.5h16v15h-16zM58.5 238.5h16v15h-16zM75.5 238.5h16v15h-16zM92.5 238.5h16v15h-16zM109.5 238.5h16v15h-16zM127.5 238.5h15v15h-15zM144.5 238.5h15v15h-15zM161.5 238.5h15v15h-15zM178.5 238.5h15v15h-15zM195.5 238.5h15v15h-15zM212.5 238.5h15v15h-15zM229.5 238.5h15v15h-15zM246.5 238.5h15v15h-15zM263.5 238.5h15v15h-15zM280.5 238.5h15v15h-15zM297.5 238.5h15v15h-15zM314.5 238.5h16v15h-16zM331.5 238.5h16v15h-16zM348.5 238.5h16v15h-16zM365.5 238.5h16v15h-16zM382.5 238.5h16v15h-16zM399.5 238.5h16v15h-16zM416.5 238.5h16v15h-16zM433.5 238.5h16v15h-16zM450.5 238.5h16v15h-16zM467.5 238.5h16v15h-16zM485.5 238.5h15v15h-15zM502.5 238.5h15v15h-15zM519.5 238.5h15v15h-15zM536.5 238.5h15v15h-15zM553.5 238.5h15v15h-15zM570.5 238.5h15v15h-15zM587.5 238.5h15v15h-15zM604.5 238.5h15v15h-15zM621.5 238.5h15v15h-15zM638.5 238.5h15v15h-15zM655.5 238.5h15v15h-15zM672.5 238.5h16v15h-16zM689.5 238.5h16v15h-16zM706.5 238.5h16v15h-16zM723.5 238.5h16v15h-16zM740.5 238.5h16v15h-16zM757.5 238.5h16v15h-16zM774.5 238.5h16v15h-16zM791.5 238.5h16v15h-16zM808.5 238.5h16v15h-16zM825.5 238.5h16v15h-16zM843.5 238.5h15v15h-15zM860.5 238.5h15v15h-15zM877.5 238.5h15v15h-15zM894.5 238.5h15v15h-15zM33.5 255.5h15v15h-15zM50.5 255.5h15v15h-15zM67.5 255.5h15v15h-15zM84.5 255.5h15v15h-15zM101.5 255.5h15v15h-15zM118.5 255.5h15v15h-15zM135.5 255.5h16v15h-16zM152.5 255.5h16v15h-16zM169.5 255.5h16v15h-16zM186.5 255.5h16v15h-16zM203.5 255.5h16v15h-16zM220.5 255.5h16v15h-16zM237.5 255.5h16v15h-16zM254.5 255.5h16v15h-16zM271.5 255.5h16v15h-16zM288.5 255.5h16v15h-16zM306.5 255.5h15v15h-15zM323.5 255.5h15v15h-15zM340.5 255.5h15v15h-15zM357.5 255.5h15v15h-15zM374.5 255.5h15v15h-15zM391.5 255.5h15v15h-15zM408.5 255.5h15v15h-15zM425.5 255.5h15v15h-15zM442.5 255.5h15v15h-15zM459.5 255.5h15v15h-15zM476.5 255.5h15v15h-15zM493.5 255.5h16v15h-16zM510.5 255.5h16v15h-16zM527.5 255.5h16v15h-16zM544.5 255.5h16v15h-16zM561.5 255.5h16v15h-16zM578.5 255.5h16v15h-16zM595.5 255.5h16v15h-16zM612.5 255.5h16v15h-16zM629.5 255.5h16v15h-16zM646.5 255.5h16v15h-16zM664.5 255.5h15v15h-15zM681.5 255.5h15v15h-15zM698.5 255.5h15v15h-15zM715.5 255.5h15v15h-15zM732.5 255.5h15v15h-15zM749.5 255.5h15v15h-15zM766.5 255.5h15v15h-15zM783.5 255.5h15v15h-15zM800.5 255.5h15v15h-15zM817.5 255.5h15v15h-15zM834.5 255.5h15v15h-15zM851.5 255.5h16v15h-16zM868.5 255.5h16v15h-16zM885.5 255.5h16v15h-16zM902.5 255.5h16v15h-16zM41.5 272.5h16v16h-16zM58.5 272.5h16v16h-16zM75.5 272.5h16v16h-16zM92.5 272.5h16v16h-16zM109.5 272.5h16v16h-16zM127.5 272.5h15v16h-15zM144.5 272.5h15v16h-15zM161.5 272.5h15v16h-15zM178.5 272.5h15v16h-15zM195.5 272.5h15v16h-15zM212.5 272.5h15v16h-15zM229.5 272.5h15v16h-15zM246.5 272.5h15v16h-15zM263.5 272.5h15v16h-15zM280.5 272.5h15v16h-15zM297.5 272.5h15v16h-15zM314.5 272.5h16v16h-16zM331.5 272.5h16v16h-16zM348.5 272.5h16v16h-16zM365.5 272.5h16v16h-16zM382.5 272.5h16v16h-16zM399.5 272.5h16v16h-16zM416.5 272.5h16v16h-16zM433.5 272.5h16v16h-16zM450.5 272.5h16v16h-16zM467.5 272.5h16v16h-16zM485.5 272.5h15v16h-15zM502.5 272.5h15v16h-15zM519.5 272.5h15v16h-15zM536.5 272.5h15v16h-15zM553.5 272.5h15v16h-15zM570.5 272.5h15v16h-15zM587.5 272.5h15v16h-15zM604.5 272.5h15v16h-15zM621.5 272.5h15v16h-15zM638.5 272.5h15v16h-15zM655.5 272.5h15v16h-15zM672.5 272.5h16v16h-16zM689.5 272.5h16v16h-16zM706.5 272.5h16v16h-16zM723.5 272.5h16v16h-16zM740.5 272.5h16v16h-16zM757.5 272.5h16v16h-16zM774.5 272.5h16v16h-16zM791.5 272.5h16v16h-16zM808.5 272.5h16v16h-16zM825.5 272.5h16v16h-16zM843.5 272.5h15v16h-15zM860.5 272.5h15v16h-15zM877.5 272.5h15v16h-15zM894.5 272.5h15v16h-15zM33.5 289.5h15v16h-15zM50.5 289.5h15v16h-15zM67.5 289.5h15v16h-15zM84.5 289.5h15v16h-15zM101.5 289.5h15v16h-15zM118.5 289.5h15v16h-15zM135.5 289.5h16v16h-16zM152.5 289.5h16v16h-16zM169.5 289.5h16v16h-16zM186.5 289.5h16v16h-16zM203.5 289.5h16v16h-16zM220.5 289.5h16v16h-16zM237.5 289.5h16v16h-16zM254.5 289.5h16v16h-16zM271.5 289.5h16v16h-16zM288.5 289.5h16v16h-16zM306.5 289.5h15v16h-15zM323.5 289.5h15v16h-15zM340.5 289.5h15v16h-15zM357.5 289.5h15v16h-15zM374.5 289.5h15v16h-15zM391.5 289.5h15v16h-15zM408.5 289.5h15v16h-15zM425.5 289.5h15v16h-15zM442.5 289.5h15v16h-15zM459.5 289.5h15v16h-15zM476.5 289.5h15v16h-15zM493.5 289.5h16v16h-16zM510.5 289.5h16v16h-16zM527.5 289.5h16v16h-16zM544.5 289.5h16v16h-16zM561.5 289.5h16v16h-16zM578.5 289.5h16v16h-16zM595.5 289.5h16v16h-16zM612.5 289.5h16v16h-16zM629.5 289.5h16v16h-16zM646.5 289.5h16v16h-16zM664.5 289.5h15v16h-15zM681.5 289.5h15v16h-15zM698.5 289.5h15v16h-15zM715.5 289.5h15v16h-15zM732.5 289.5h15v16h-15zM749.5 289.5h15v16h-15zM766.5 289.5h15v16h-15zM783.5 289.5h15v16h-15zM800.5 289.5h15v16h-15zM817.5 289.5h15v16h-15zM834.5 289.5h15v16h-15zM851.5 289.5h16v16h-16zM868.5 289.5h16v16h-16zM885.5 289.5h16v16h-16zM902.5 289.5h16v16h-16zM41.5 306.5h16v16h-16zM58.5 306.5h16v16h-16zM75.5 306.5h16v16h-16zM92.5 306.5h16v16h-16zM109.5 306.5h16v16h-16zM127.5 306.5h15v16h-15zM144.5 306.5h15v16h-15zM161.5 306.5h15v16h-15zM178.5 306.5h15v16h-15zM195.5 306.5h15v16h-15zM212.5 306.5h15v16h-15zM229.5 306.5h15v16h-15zM246.5 306.5h15v16h-15zM263.5 306.5h15v16h-15zM280.5 306.5h15v16h-15zM297.5 306.5h15v16h-15zM314.5 306.5h16v16h-16zM331.5 306.5h16v16h-16zM348.5 306.5h16v16h-16zM365.5 306.5h16v16h-16zM382.5 306.5h16v16h-16zM399.5 306.5h16v16h-16zM416.5 306.5h16v16h-16zM433.5 306.5h16v16h-16zM450.5 306.5h16v16h-16zM467.5 306.5h16v16h-16zM485.5 306.5h15v16h-15zM502.5 306.5h15v16h-15zM519.5 306.5h15v16h-15zM536.5 306.5h15v16h-15zM553.5 306.5h15v16h-15zM570.5 306.5h15v16h-15zM587.5 306.5h15v16h-15zM604.5 306.5h15v16h-15zM621.5 306.5h15v16h-15zM638.5 306.5h15v16h-15zM655.5 306.5h15v16h-15zM672.5 306.5h16v16h-16zM689.5 306.5h16v16h-16zM706.5 306.5h16v16h-16zM723.5 306.5h16v16h-16zM740.5 306.5h16v16h-16zM757.5 306.5h16v16h-16zM774.5 306.5h16v16h-16zM791.5 306.5h16v16h-16zM808.5 306.5h16v16h-16zM825.5 306.5h16v16h-16zM843.5 306.5h15v16h-15zM860.5 306.5h15v16h-15zM877.5 306.5h15v16h-15zM894.5 306.5h15v16h-15zM33.5 323.5h15v16h-15zM50.5 323.5h15v16h-15zM67.5 323.5h15v16h-15zM84.5 323.5h15v16h-15zM101.5 323.5h15v16h-15zM118.5 323.5h15v16h-15zM135.5 323.5h16v16h-16zM152.5 323.5h16v16h-16zM169.5 323.5h16v16h-16zM186.5 323.5h16v16h-16zM203.5 323.5h16v16h-16zM220.5 323.5h16v16h-16zM237.5 323.5h16v16h-16zM254.5 323.5h16v16h-16zM271.5 323.5h16v16h-16zM288.5 323.5h16v16h-16zM306.5 323.5h15v16h-15zM323.5 323.5h15v16h-15zM340.5 323.5h15v16h-15zM357.5 323.5h15v16h-15zM374.5 323.5h15v16h-15zM391.5 323.5h15v16h-15zM408.5 323.5h15v16h-15zM425.5 323.5h15v16h-15zM442.5 323.5h15v16h-15zM459.5 323.5h15v16h-15zM476.5 323.5h15v16h-15zM493.5 323.5h16v16h-16zM510.5 323.5h16v16h-16zM527.5 323.5h16v16h-16zM544.5 323.5h16v16h-16zM561.5 323.5h16v16h-16zM578.5 323.5h16v16h-16zM595.5 323.5h16v16h-16zM612.5 323.5h16v16h-16zM629.5 323.5h16v16h-16zM646.5 323.5h16v16h-16zM664.5 323.5h15v16h-15zM681.5 323.5h15v16h-15zM698.5 323.5h15v16h-15zM715.5 323.5h15v16h-15zM732.5 323.5h15v16h-15zM749.5 323.5h15v16h-15zM766.5 323.5h15v16h-15zM783.5 323.5h15v16h-15zM800.5 323.5h15v16h-15zM817.5 323.5h15v16h-15zM834.5 323.5h15v16h-15zM851.5 323.5h16v16h-16zM868.5 323.5h16v16h-16zM885.5 323.5h16v16h-16zM902.5 323.5h16v16h-16zM41.5 340.5h16v16h-16zM58.5 340.5h16v16h-16zM75.5 340.5h16v16h-16zM92.5 340.5h16v16h-16zM109.5 340.5h16v16h-16zM127.5 340.5h15v16h-15zM144.5 340.5h15v16h-15zM161.5 340.5h15v16h-15zM178.5 340.5h15v16h-15zM195.5 340.5h15v16h-15zM212.5 340.5h15v16h-15zM229.5 340.5h15v16h-15zM246.5 340.5h15v16h-15zM263.5 340.5h15v16h-15zM280.5 340.5h15v16h-15zM297.5 340.5h15v16h-15zM314.5 340.5h16v16h-16zM331.5 340.5h16v16h-16zM348.5 340.5h16v16h-16zM365.5 340.5h16v16h-16zM382.5 340.5h16v16h-16zM399.5 340.5h16v16h-16zM416.5 340.5h16v16h-16zM433.5 340.5h16v16h-16zM450.5 340.5h16v16h-16zM467.5 340.5h16v16h-16zM485.5 340.5h15v16h-15zM502.5 340.5h15v16h-15zM519.5 340.5h15v16h-15zM536.5 340.5h15v16h-15zM553.5 340.5h15v16h-15zM570.5 340.5h15v16h-15zM587.5 340.5h15v16h-15zM604.5 340.5h15v16h-15zM621.5 340.5h15v16h-15zM638.5 340.5h15v16h-15zM655.5 340.5h15v16h-15zM672.5 340.5h16v16h-16zM689.5 340.5h16v16h-16zM706.5 340.5h16v16h-16zM723.5 340.5h16v16h-16zM740.5 340.5h16v16h-16zM757.5 340.5h16v16h-16zM774.5 340.5h16v16h-16zM791.5 340.5h16v16h-16zM808.5 340.5h16v16h-16zM825.5 340.5h16v16h-16zM843.5 340.5h15v16h-15zM860.5 340.5h15v16h-15zM877.5 340.5h15v16h-15zM894.5 340.5h15v16h-15zM33.5 357.5h15v16h-15zM50.5 357.5h15v16h-15zM67.5 357.5h15v16h-15zM84.5 357.5h15v16h-15zM101.5 357.5h15v16h-15zM118.5 357.5h15v16h-15zM135.5 357.5h16v16h-16zM152.5 357.5h16v16h-16zM169.5 357.5h16v16h-16zM186.5 357.5h16v16h-16zM203.5 357.5h16v16h-16zM220.5 357.5h16v16h-16zM237.5 357.5h16v16h-16zM254.5 357.5h16v16h-16zM271.5 357.5h16v16h-16zM288.5 357.5h16v16h-16zM306.5 357.5h15v16h-15zM323.5 357.5h15v16h-15zM340.5 357.5h15v16h-15zM357.5 357.5h15v16h-15zM374.5 357.5h15v16h-15zM391.5 357.5h15v16h-15zM408.5 357.5h15v16h-15zM425.5 357.5h15v16h-15zM442.5 357.5h15v16h-15zM459.5 357.5h15v16h-15zM476.5 357.5h15v16h-15zM493.5 357.5h16v16h-16zM510.5 357.5h16v16h-16zM527.5 357.5h16v16h-16zM544.5 357.5h16v16h-16zM561.5 357.5h16v16h-16zM578.5 357.5h16v16h-16zM595.5 357.5h16v16h-16zM612.5 357.5h16v16h-16zM629.5 357.5h16v16h-16zM646.5 357.5h16v16h-16zM664.5 357.5h15v16h-15zM681.5 357.5h15v16h-15zM698.5 357.5h15v16h-15zM715.5 357.5h15v16h-15zM732.5 357.5h15v16h-15zM749.5 357.5h15v16h-15zM766.5 357.5h15v16h-15zM783.5 357.5h15v16h-15zM800.5 357.5h15v16h-15zM817.5 357.5h15v16h-15zM834.5 357.5h15v16h-15zM851.5 357.5h16v16h-16zM868.5 357.5h16v16h-16zM885.5 357.5h16v16h-16zM902.5 357.5h16v16h-16z" stroke="#00b050" stroke-width="1" fill="none" shape-rendering="crispEdges"/>
<path clip-path="url(#bc2)" d="M578.5 357.5h16v16h-16zM595.5 357.5h16v16h-16zM612.5 357.5h16v16h-16zM629.5 357.5h16v16h-16zM646.5 357.5h16v16h-16zM664.5 357.5h15v16h-15zM681.5 357.5h15v16h-15zM587.5 374.5h15v16h-15zM604.5 374.5h15v16h-15zM621.5 374.5h15v16h-15zM638.5 374.5h15v16h-15zM655.5 374.5h15v16h-15zM672.5 374.5h16v16h-16zM578.5 391.5h16v16h-16zM595.5 391.5h16v16h-16zM612.5 391.5h16v16h-16zM629.5 391.5h16v16h-16zM646.5 391.5h16v16h-16zM664.5 391.5h15v16h-15zM681.5 391.5h15v16h-15zM587.5 408.5h15v16h-15zM604.5 408.5h15v16h-15zM621.5 408.5h15v16h-15zM638.5 408.5h15v16h-15zM655.5 408.5h15v16h-15zM672.5 408.5h16v16h-16zM578.5 426.5h16v15h-16zM595.5 426.5h16v15h-16zM612.5 426.5h16v15h-16zM629.5 426.5h16v15h-16zM646.5 426.5h16v15h-16zM664.5 426.5h15v15h-15zM681.5 426.5h15v15h-15zM587.5 443.5h15v15h-15zM604.5 443.5h15v15h-15zM621.5 443.5h15v15h-15zM638.5 443.5h15v15h-15zM655.5 443.5h15v15h-15zM672.5 443.5h16v15h-16zM578.5 460.5h16v15h-16zM595.5 460.5h16v15h-16zM612.5 460.5h16v15h-16zM629.5 460.5h16v15h-16zM646.5 460.5h16v15h-16zM664.5 460.5h15v15h-15zM681.5 460.5h15v15h-15zM587.5 477.5h15v15h-15zM604.5 477.5h15v15h-15zM621.5 477.5h15v15h-15zM638.5 477.5h15v15h-15zM655.5 477.5h15v15h-15zM672.5 477.5h16v15h-16zM578.5 494.5h16v15h-16zM595.5 494.5h16v15h-16zM612.5 494.5h16v15h-16zM629.5 494.5h16v15h-16zM646.5 494.5h16v15h-16zM664.5 494.5h15v15h-15zM681.5 494.5h15v15h-15zM587.5 511.5h15v15h-15zM604.5 511.5h15v15h-15zM621.5 511.5h15v15h-15zM638.5 511.5h15v15h-15zM655.5 511.5h15v15h-15zM672.5 511.5h16v15h-16zM578.5 528.5h16v15h-16zM595.5 528.5h16v15h-16zM612.5 528.5h16v15h-16zM629.5 528.5h16v15h-16zM646.5 528.5h16v15h-16zM664.5 528.5h15v15h-15zM681.5 528.5h15v15h-15zM587.5 545.5h15v15h-15zM604.5 545.5h15v15h-15zM621.5 545.5h15v15h-15zM638.5 545.5h15v15h-15zM655.5 545.5h15v15h-15zM672.5 545.5h16v15h-16zM578.5 562.5h16v15h-16zM595.5 562.5h16v15h-16zM612.5 562.5h16v15h-16zM629.5 562.5h16v15h-16zM646.5 562.5h16v15h-16zM664.5 562.5h15v15h-15zM681.5 562.5h15v15h-15zM587.5 579.5h15v15h-15zM604.5 579.5h15v15h-15zM621.5 579.5h15v15h-15zM638.5 579.5h15v15h-15zM655.5 579.5h15v15h-15zM672.5 579.5h16v15h-16zM578.5 596.5h16v15h-16zM595.5 596.5h16v15h-16zM612.5 596.5h16v15h-16zM629.5 596.5h16v15h-16zM646.5 596.5h16v15h-16zM664.5 596.5h15v15h-15zM681.5 596.5h15v15h-15zM587.5 613.5h15v15h-15zM604.5 613.5h15v15h-15zM621.5 613.5h15v15h-15zM638.5 613.5h15v15h-15zM655.5 613.5h15v15h-15zM672.5 613.5h16v15h-16zM578.5 630.5h16v16h-16zM595.5 630.5h16v16h-16zM612.5 630.5h16v16h-16zM629.5 630.5h16v16h-16zM646.5 630.5h16v16h-16zM664.5 630.5h15v16h-15zM681.5 630.5h15v16h-15zM587.5 647.5h15v16h-15zM604.5 647.5h15v16h-15zM621.5 647.5h15v16h-15zM638.5 647.5h15v16h-15zM655.5 647.5h15v16h-15zM672.5 647.5h16v16h-16zM578.5 664.5h16v16h-16zM595.5 664.5h16v16h-16zM612.5 664.5h16v16h-16zM629.5 664.5h16v16h-16zM646.5 664.5h16v16h-16zM664.5 664.5h15v16h-15zM681.5 664.5h15v16h-15zM587.5 681.5h15v16h-15zM604.5 681.5h15v16h-15zM621.5 681.5h15v16h-15zM638.5 681.5h15v16h-15zM655.5 681.5h15v16h-15zM672.5 681.5h16v16h-16zM578.5 698.5h16v16h-16zM595.5 698.5h16v16h-16zM612.5 698.5h16v16h-16zM629.5 698.5h16v16h-16zM646.5 698.5h16v16h-16zM664.5 698.5h15v16h-15zM681.5 698.5h15v16h-15zM587.5 715.5h15v16h-15zM604.5 715.5h15v16h-15zM621.5 715.5h15v16h-15zM638.5 715.5h15v16h-15zM655.5 715.5h15v16h-15zM672.5 715.5h16v16h-16zM578.5 732.5h16v16h-16zM595.5 732.5h16v16h-16zM612.5 732.5h16v16h-16zM629.5 732.5h16v16h-16zM646.5 732.5h16v16h-16zM664.5 732.5h15v16h-15zM681.5 732.5h15v16h-15zM587.5 749.5h15v16h-15zM604.5 749.5h15v16h-15zM621.5 749.5h15v16h-15zM638.5 749.5h15v16h-15zM655.5 749.5h15v16h-15zM672.5 749.5h16v16h-16zM578.5 766.5h16v16h-16zM595.5 766.5h16v16h-16zM612.5 766.5h16v16h-16zM629.5 766.5h16v16h-16zM646.5 766.5h16v16h-16zM664.5 766.5h15v16h-15zM681.5 766.5h15v16h-15zM587.5 784.5h15v15h-15zM604.5 784.5h15v15h-15zM621.5 784.5h15v15h-15zM638.5 784.5h15v15h-15zM655.5 784.5h15v15h-15zM672.5 784.5h16v15h-16zM578.5 801.5h16v15h-16zM595.5 801.5h16v15h-16zM612.5 801.5h16v15h-16zM629.5 801.5h16v15h-16zM646.5 801.5h16v15h-16zM664.5 801.5h15v15h-15zM681.5 801.5h15v15h-15zM587.5 818.5h15v15h-15zM604.5 818.5h15v15h-15zM621.5 818.5h15v15h-15zM638.5 818.5h15v15h-15zM655.5 818.5h15v15h-15zM672.5 818.5h16v15h-16zM578.5 835.5h16v15h-16zM595.5 835.5h16v15h-16zM612.5 835.5h16v15h-16zM629.5 835.5h16v15h-16zM646.5 835.5h16v15h-16zM664.5 835.5h15v15h-15zM681.5 835.5h15v15h-15zM587.5 852.5h15v15h-15zM604.5 852.5h15v15h-15zM621.5 852.5h15v15h-15zM638.5 852.5h15v15h-15zM655.5 852.5h15v15h-15zM672.5 852.5h16v15h-16zM578.5 869.5h16v15h-16zM595.5 869.5h16v15h-16zM612.5 869.5h16v15h-16zM629.5 869.5h16v15h-16zM646.5 869.5h16v15h-16zM664.5 869.5h15v15h-15zM681.5 869.5h15v15h-15zM587.5 886.5h15v15h-15zM604.5 886.5h15v15h-15zM621.5 886.5h15v15h-15zM638.5 886.5h15v15h-15zM655.5 886.5h15v15h-15zM672.5 886.5h16v15h-16zM578.5 903.5h16v15h-16zM595.5 903.5h16v15h-16zM612.5 903.5h16v15h-16zM629.5 903.5h16v15h-16zM646.5 903.5h16v15h-16zM664.5 903.5h15v15h-15zM681.5 903.5h15v15h-15zM587.5 920.5h15v15h-15zM604.5 920.5h15v15h-15zM621.5 920.5h15v15h-15zM638.5 920.5h15v15h-15zM655.5 920.5h15v15h-15zM672.5 920.5h16v15h-16zM578.5 937.5h16v15h-16zM595.5 937.5h16v15h-16zM612.5 937.5h16v15h-16zM629.5 937.5h16v15h-16zM646.5 937.5h16v15h-16zM664.5 937.5h15v15h-15zM681.5 937.5h15v15h-15zM587.5 954.5h15v15h-15zM604.5 954.5h15v15h-15zM621.5 954.5h15v15h-15zM638.5 954.5h15v15h-15zM655.5 954.5h15v15h-15zM672.5 954.5h16v15h-16zM578.5 971.5h16v15h-16zM595.5 971.5h16v15h-16zM612.5 971.5h16v15h-16zM629.5 971.5h16v15h-16zM646.5 971.5h16v15h-16zM664.5 971.5h15v15h-15zM681.5 971.5h15v15h-15zM587.5 988.5h15v16h-15zM604.5 988.5h15v16h-15zM621.5 988.5h15v16h-15zM638.5 988.5h15v16h-15zM655.5 988.5h15v16h-15zM672.5 988.5h16v16h-16z" stroke="#00b050" stroke-width="1" fill="none" shape-rendering="crispEdges"/>
<path d="M47 373.200h539" stroke="#7fd6c9" stroke-width="1"/>
<path d="M683.700 500V998" stroke="#8fd9cc" stroke-width="1"/>
<rect x="925" y="195" width="995" height="108.500" fill="url(#tile)"/>
<rect x="925" y="195" width="995" height="108.500" fill="#000" filter="url(#grain2)" opacity=".32"/>
<rect x="907" y="195" width="18" height="67.300" fill="#fff"/>
<path d="M743 376.500H1920V998H703V500H743z" fill="url(#wood)"/>
<rect x="703" y="376.500" width="1217" height="621.500" fill="#000" filter="url(#grain)" opacity=".3" clip-path="url(#wc)"/>
<path d="M670.500 303.500H891.300V268.600H963V303.500H1920V376.500H743V500H670.500z" fill="#fff"/>
<path d="M670.500 303.500H891.300V268.600H906.900V319.500H685.500V500H670.500z" fill="url(#hg)"/>
<path d="M963 303.500H1044.500V319.500H963z M1198.500 303.500H1920V319.500H1198.500z" fill="url(#hg)"/>
<path d="M692 319.500H906V334.100H692z M960.500 319.500H1044.500V334.100H960.500z M1332.500 319.500H1920V334.100H1332.500z" fill="url(#hx)"/>
<clipPath id="zc"><rect x="685.500" y="319.500" width="15" height="180.5"/></clipPath>
<path d="M702.700 319.600L686 349.6L699.8 372.7L686 395.8L699.8 418.9L686 442L699.8 465.1L686 488.2L699.8 511.3" stroke="#d9a520" stroke-width="1.200" clip-path="url(#zc)"/>
<path d="M907.500 269l13.500 24-13.500 24M921 269l-13.500 24 13.500 24" stroke="#d9a520" stroke-width="1"/>
<path d="M700.500 334.100H921.500V268.600H960.500V334.100H1044.500V373.700H740V500H700.500z M1198.500 334.100H1920V373.700H1198.500z" fill="url(#ho)"/>
<path d="M670.500 500V303.500H891.300V268.600H906.900 M963 303.500H1044.500V319.500 M1198.500 319.500V303.500H1505.500 M1520.500 303.500H1689 M1705 303.500H1920" stroke="#b40000" stroke-width="1.300"/>
<path d="M685.500 500V319.500H906.900V268.600H921.500 M960.500 319.500H1044.500 M1332.500 319.500H1920" stroke="#c8961e" stroke-width="1.200"/>
<path d="M700.500 500V334.100H921.500V268.600H960.500V334.100H1044.500V373.700H740V500 M1198.500 334.100V373.700H1920 M1332.500 334.100H1920" stroke="#1e6e1e" stroke-width="1.300"/>
<path d="M925 265.200H963V303.500 M742.300 500V376.200H1044.500 M1198.500 376.200H1920" stroke="#5a6aa8" stroke-width="1.200"/>
<path d="M906.900 195V268.600 M924.700 195V262.300 M906.900 262.300H1075.300 C1075.300 232 1068 210 1060 195" stroke="#ff6a00" stroke-width="1.300"/>
<path d="M1044.500 303.500H1052.400V376.500H1044.500" stroke="#ff6a00" stroke-width="1.400" fill="#fff"/>
<path d="M1198.500 303.500H1190.500V323H1198.500 M1198.500 331.500H1190.500V376.500H1198.500" stroke="#ff6a00" stroke-width="1.400" fill="#fff"/>
<path d="M1198.500 319.500H1332.500V335.500H1198.500 M1198.500 323.300H1329.500V331.700H1198.500" stroke="#ff6a00" stroke-width="1.300" fill="none"/>
<path d="M1198.500 320.200h133v14h-133z" fill="#fff" stroke="none"/>
<path d="M1198.500 319.500H1332.500V335.500H1198.500 M1198.500 323.300H1329.500V331.700H1198.500" stroke="#ff6a00" stroke-width="1.300" fill="none"/>
<path d="M1044.500 303.500V319.500M1198.500 303.500V319.500" stroke="#b40000" stroke-width="1.300"/>
<path d="M1044.500 334.100V373.700M1198.500 335.500V373.700" stroke="#1e6e1e" stroke-width="1.300"/>
<path d="M1068 327.200H1205.300" stroke="#ff6a00" stroke-width="1.300"/>
<path d="M1136 285.400H1167.700 M1160 278l7.700 7.400-7.700 7.400" stroke="#ff6a00" stroke-width="1.200"/>
<path d="M685.600 500V998" stroke="#ff6a00" stroke-width="1.800"/>
<rect x="1505.5" y="195" width="15.500" height="108.500" fill="#fff"/>
<path d="M1506.3 195v108.500M1520 195v108.500" stroke="#dcc35c" stroke-width="2.400"/>
<rect x="1689" y="195" width="15.500" height="108.500" fill="#fff"/>
<path d="M1689.8 195v108.500M1703.5 195v108.500" stroke="#dcc35c" stroke-width="2.400"/>
<path d="M584 206H1920M584 219.300H1920" stroke="#cf8585" stroke-width="1" stroke-dasharray="43 17"/>
<path d="M585.500 194V998" stroke="#cf8585" stroke-width="1" stroke-dasharray="43 17"/><rect x="851.7" y="793.3" width="72" height="61" fill="#fff" stroke="#1a9a1a" stroke-width="1.400"/><path d="M859.7 793.3v61" stroke="#1a9a1a" stroke-width="1.300"/>
<rect x="989.7" y="793.3" width="72" height="61" fill="#fff" stroke="#1a9a1a" stroke-width="1.400"/><path d="M997.7 793.3v61" stroke="#1a9a1a" stroke-width="1.300"/>
<rect x="1127.7" y="793.3" width="72" height="61" fill="#fff" stroke="#1a9a1a" stroke-width="1.400"/><path d="M1135.7 793.3v61" stroke="#1a9a1a" stroke-width="1.300"/>
<rect x="1265.7" y="793.3" width="72" height="61" fill="#fff" stroke="#1a9a1a" stroke-width="1.400"/><path d="M1273.7 793.3v61" stroke="#1a9a1a" stroke-width="1.300"/>
<rect x="1403.7" y="793.3" width="72" height="61" fill="#fff" stroke="#1a9a1a" stroke-width="1.400"/><path d="M1411.7 793.3v61" stroke="#1a9a1a" stroke-width="1.300"/>
<rect x="851.7" y="885.3" width="72" height="61" fill="#fff" stroke="#1a9a1a" stroke-width="1.400"/><path d="M859.7 885.3v61" stroke="#1a9a1a" stroke-width="1.300"/>
<rect x="989.7" y="885.3" width="72" height="61" fill="#fff" stroke="#1a9a1a" stroke-width="1.400"/><path d="M997.7 885.3v61" stroke="#1a9a1a" stroke-width="1.300"/>
<rect x="1127.7" y="885.3" width="72" height="61" fill="#fff" stroke="#1a9a1a" stroke-width="1.400"/><path d="M1135.7 885.3v61" stroke="#1a9a1a" stroke-width="1.300"/>
<rect x="1265.7" y="885.3" width="72" height="61" fill="#fff" stroke="#1a9a1a" stroke-width="1.400"/><path d="M1273.7 885.3v61" stroke="#1a9a1a" stroke-width="1.300"/>
<rect x="1403.7" y="885.3" width="72" height="61" fill="#fff" stroke="#1a9a1a" stroke-width="1.400"/><path d="M1411.7 885.3v61" stroke="#1a9a1a" stroke-width="1.300"/>
<rect x="851.7" y="977.3" width="72" height="61" fill="#fff" stroke="#1a9a1a" stroke-width="1.400"/><path d="M859.7 977.3v61" stroke="#1a9a1a" stroke-width="1.300"/>
<rect x="989.7" y="977.3" width="72" height="61" fill="#fff" stroke="#1a9a1a" stroke-width="1.400"/><path d="M997.7 977.3v61" stroke="#1a9a1a" stroke-width="1.300"/>
<rect x="1127.7" y="977.3" width="72" height="61" fill="#fff" stroke="#1a9a1a" stroke-width="1.400"/><path d="M1135.7 977.3v61" stroke="#1a9a1a" stroke-width="1.300"/>
<rect x="1265.7" y="977.3" width="72" height="61" fill="#fff" stroke="#1a9a1a" stroke-width="1.400"/><path d="M1273.7 977.3v61" stroke="#1a9a1a" stroke-width="1.300"/>
<rect x="1403.7" y="977.3" width="72" height="61" fill="#fff" stroke="#1a9a1a" stroke-width="1.400"/><path d="M1411.7 977.3v61" stroke="#1a9a1a" stroke-width="1.300"/>
<path d="M887.4 855.3v15M902.4 855.3v15M927.7 833.3h40M927.7 840.3h28M924.2 855.5h16M956.7 855.5h33M1025.4 855.3v15M1040.4 855.3v15M1065.7 833.3h40M1065.7 840.3h28M1062.2 855.5h16M1094.7 855.5h33M1163.4 855.3v15M1178.4 855.3v15M1203.7 833.3h40M1203.7 840.3h28M1200.2 855.5h16M1232.7 855.5h33M1301.4 855.3v15M1316.4 855.3v15M1341.7 833.3h40M1341.7 840.3h28M1338.2 855.5h16M1370.7 855.5h33M1439.4 855.3v15M1454.4 855.3v15M1479.7 833.3h40M1479.7 840.3h28M1476.2 855.5h16M1508.7 855.5h33M887.4 947.3v15M902.4 947.3v15M927.7 925.3h40M927.7 932.3h28M924.2 947.5h16M956.7 947.5h33M1025.4 947.3v15M1040.4 947.3v15M1065.7 925.3h40M1065.7 932.3h28M1062.2 947.5h16M1094.7 947.5h33M1163.4 947.3v15M1178.4 947.3v15M1203.7 925.3h40M1203.7 932.3h28M1200.2 947.5h16M1232.7 947.5h33M1301.4 947.3v15M1316.4 947.3v15M1341.7 925.3h40M1341.7 932.3h28M1338.2 947.5h16M1370.7 947.5h33M1439.4 947.3v15M1454.4 947.3v15M1479.7 925.3h40M1479.7 932.3h28M1476.2 947.5h16M1508.7 947.5h33M887.4 1039.3v15M902.4 1039.3v15M927.7 1017.3h40M927.7 1024.3h28M924.2 1039.5h16M956.7 1039.5h33M1025.4 1039.3v15M1040.4 1039.3v15M1065.7 1017.3h40M1065.7 1024.3h28M1062.2 1039.5h16M1094.7 1039.5h33M1163.4 1039.3v15M1178.4 1039.3v15M1203.7 1017.3h40M1203.7 1024.3h28M1200.2 1039.5h16M1232.7 1039.5h33M1301.4 1039.3v15M1316.4 1039.3v15M1341.7 1017.3h40M1341.7 1024.3h28M1338.2 1039.5h16M1370.7 1039.5h33M1439.4 1039.3v15M1454.4 1039.3v15M1479.7 1017.3h40M1479.7 1024.3h28M1476.2 1039.5h16M1508.7 1039.5h33" stroke="#ff9a57" stroke-width="1"/>
<path d="M1792.200 833V868M1792.200 887V930.600M1792.200 947V990M1792.200 833.200H1814.400M1830.700 833.200H1875.400M1891.600 833.200H1920M1792.200 840.400H1814.400M1830.700 840.400H1875.400M1891.600 840.400H1920M1807.600 855.300V868M1807.600 887V922.500M1807.600 947V991.600M1807.600 855.300H1844M1861.800 855.300H1903.800M1807.600 991.600H1844M1861.800 991.600H1903.800" stroke="#ff9a57" stroke-width="1"/>
<path d="M1205.900 389.200L1415.500 525.900H1358.600V582.200H1205.900z" fill="#fff" stroke="#666" stroke-width="1"/>
<path d="M1205.900 472.100L1358.600 534.700 M1250.700 418.600L1358.600 525.900 M1350 482.800L1368 525.900 M1374.600 499.300V525.900" stroke="#666" stroke-width="1"/>
<path d="M1282.300 582V520C1282.300 494 1298 472 1317 461.800 M1275 452.600L1317.500 461.400L1309.400 502" stroke="#666" stroke-width="1"/>
<path d="M1374.6 376V404M1414.4 376V417.5M1455.5 376V394.4M1495.6 376V394.4M1536.2 376V394.4M1576.6 376V394.4M1616.7 376V394.4M1657.3 376V394.4M1698.0 376V394.4M1738.6 376V394.4M1778.7 376V394.4M1819.3 376V394.4M1455.5 428V470M1495.6 428V470M1536.2 428V470M1576.6 428V470M1616.7 428V470M1657.3 428V470M1698.0 428V470M1738.6 428V470M1778.7 428V470M1819.3 428V470M1436.600 449.400H1481M1523 449.400H1566.600M1610 449.400H1654.600M1698 449.400H1738.600M1784.600 449.400H1819M1698 504V526.500H1738.600V504M1778.700 504V526.500H1819.300V504M1789 419.500L1819.300 449.400L1789 479.700M1414.600 461V507M1212 374L1235.600 389.500M1305.600 374.500L1313.700 394.500M1271.900 413.900L1308.700 437.600M1330 434.500L1339.400 457.600M1334.400 453.200L1356 450.100L1393.700 449.500M1345 461L1380.600 484.500M1374.600 448.200V480.100" stroke="#66707c" stroke-width="1"/>
<text transform="translate(1271,386.8) rotate(-90)" text-anchor="end" font-size="20.500" fill="#5f656e">4</text>
<text transform="translate(1348,386.8) rotate(-90)" text-anchor="end" font-size="20.500" fill="#5f656e">5</text>
<text transform="translate(1401,386.8) rotate(-90)" text-anchor="end" font-size="20.500" fill="#5f656e">6</text>
<text transform="translate(1442,386.8) rotate(-90)" text-anchor="end" font-size="20.500" fill="#5f656e">7</text>
<text transform="translate(1482.5,386.8) rotate(-90)" text-anchor="end" font-size="20.500" fill="#5f656e">8</text>
<text transform="translate(1522,386.8) rotate(-90)" text-anchor="end" font-size="20.500" fill="#5f656e">9</text>
<text transform="translate(1563.7,387.3) rotate(-90)" text-anchor="end" font-size="20.500" fill="#5f656e">10</text>
<text transform="translate(1603.7,387.3) rotate(-90)" text-anchor="end" font-size="20.500" fill="#5f656e">11</text>
<text transform="translate(1645,387.3) rotate(-90)" text-anchor="end" font-size="20.500" fill="#5f656e">12</text>
<text transform="translate(1686,387.3) rotate(-90)" text-anchor="end" font-size="20.500" fill="#5f656e">13</text>
<text transform="translate(1725,387.3) rotate(-90)" text-anchor="end" font-size="20.500" fill="#5f656e">14</text>
<text transform="translate(1766,387.3) rotate(-90)" text-anchor="end" font-size="20.500" fill="#5f656e">15</text>
<text transform="translate(1806,387.3) rotate(-90)" text-anchor="end" font-size="20.500" fill="#5f656e">16</text>
<text x="1221" y="439" font-size="19.500" fill="#555">3</text>
<text x="1221" y="516" font-size="19.500" fill="#555">2</text>
<text x="1221" y="568" font-size="19.500" fill="#555">1</text>
<text transform="translate(1263.5,594) rotate(-80.800)" font-size="19.500" fill="#555" textLength="170" lengthAdjust="spacingAndGlyphs">17 x 0.176 = 3.000</text>
<circle cx="1282.400" cy="582.200" r="15" fill="#808080"/>
<path d="M449.500 527V630M449.500 542.500H1920" stroke="#3cb371" stroke-width="1.200"/>
<path d="M494.3 736.800h54M575.3 736.800h1.500M597.3 736.800h54M678.3 736.800h1.500M700.3 736.800h54M781.3 736.800h1.500M803.3 736.800h54M884.3 736.800h1.500M906.3 736.800h54M987.3 736.800h1.500M1009.3 736.800h54M1090.3 736.800h1.500M1112.3 736.800h54M1193.3 736.800h1.500M1215.3 736.800h54M1296.3 736.800h1.500M1318.3 736.800h54M1399.3 736.800h1.500M1421.3 736.800h54M1502.3 736.800h1.500M1524.3 736.800h54M1605.3 736.800h1.500M1627.3 736.800h54M1708.3 736.800h1.500M1730.3 736.800h54M1811.3 736.800h1.500M1833.3 736.800h54M1914.3 736.800h1.500" stroke="#3cb371" stroke-width="1.600"/>
<path d="M73.500 195V998M227.500 195V998M1001.500 195V998M828.500 195V392.500H1920" stroke="#7ab8f5" stroke-width="1.100"/>
<path d="M1097 805V843M1097 805H1130M1180 805H1215.500M1097 893V947" stroke="#7ab8f5" stroke-width="1.100"/>
<path d="M1215.500 151.700V805" stroke="#7ab8f5" stroke-width="1.100" stroke-dasharray="53.400 23 1.500 24.800"/>
<path d="M63 268.5h23M66 264l15 8.500" stroke="#7ab8f5" stroke-width="1"/>
<path d="M63 319.5h23M66 315l15 8.500" stroke="#7ab8f5" stroke-width="1"/>
<path d="M63 334.5h23M66 330l15 8.500" stroke="#7ab8f5" stroke-width="1"/>
<path d="M63 833.5h23M66 829l15 8.500" stroke="#7ab8f5" stroke-width="1"/>
<path d="M227.500 707.500L319.800 754L227.500 799.400" stroke="#4aa3f5" stroke-width="1.100"/>
<path d="M800 195A29.300 29.300 0 0 0 828 233A34.750 34.750 0 0 0 828 302.500A44.750 44.750 0 0 0 829 392.500A44.50 44.50 0 0 0 918.0 392.500A43.50 43.50 0 0 0 1005.0 392.500A31.50 31.50 0 0 0 1068.0 392.500A33.50 33.50 0 0 0 1135.0 392.500A27.00 27.00 0 0 0 1189.0 392.500A35.00 35.00 0 0 0 1259.0 392.500A36.00 36.00 0 0 0 1331.0 392.500A30.50 30.50 0 0 0 1392.0 392.500A26.60 26.60 0 0 0 1445.2 392.500A43.40 43.40 0 0 0 1532.0 392.500A28.00 28.00 0 0 0 1588.0 392.500A45.90 45.90 0 0 0 1679.8 392.500A43.10 43.10 0 0 0 1766.0 392.500A39.35 39.35 0 0 0 1844.7 392.500A43.15 43.15 0 0 0 1931.0 392.500" stroke="#ff0000" stroke-width="1.050"/>
<path d="M1579 277C1576 240 1584 206 1605 206C1627 206 1635 240 1631.500 277z" fill="#fff" stroke="#ff00ff" stroke-width="1.200"/>
<path d="M1586 277C1575 245 1582 208 1605 208C1628 208 1635 245 1624 277" stroke="#ff00ff" stroke-width="1"/>
<path d="M1576 276.500H1634C1638 277 1639 281 1638.500 285L1634.500 303.500H1575.500L1571.500 285C1571 281 1572 277 1576 276.500z" fill="#fff" stroke="#ff00ff" stroke-width="1.200"/>
<path d="M1754.300 303.500V268C1754.300 246 1775 235.500 1800 235.500C1826 235.500 1846.700 246 1846.700 268V303.500z" fill="#fff" stroke="#ff00ff" stroke-width="1.200"/>
<path d="M1764 270C1764 255 1780 245.500 1800 245.500C1822 245.500 1837 255 1837 270C1837 284 1826 289.500 1810 289.500H1790C1774 289.500 1764 284 1764 270z" stroke="#ff00ff" stroke-width="1.200"/>
<path d="M1798 278.500c0-2 4-2 4 0v8h-4z" stroke="#ff00ff" stroke-width="1"/><circle cx="1800" cy="293.500" r="4" stroke="#ff00ff" stroke-width="1"/>
<text x="1120" y="211" font-size="31" fill="#0000ff">F:</text>
<text x="1283.5" y="210.8" font-size="32" fill="#0000ff" textLength="62" lengthAdjust="spacingAndGlyphs">Tiles</text>
<text x="1519.5" y="214.5" font-size="31" fill="#0000ff">F:</text>
<text x="1624" y="214.5" font-size="31.3" fill="#0000ff" textLength="58.5" lengthAdjust="spacingAndGlyphs">Tiles</text>
<text x="1723.6" y="216" font-size="31" fill="#0000ff">A:</text>
<text x="1726" y="260.5" font-size="31" fill="#0000ff">F:</text>
<text x="1869" y="216" font-size="31.5" fill="#0000ff">3.500</text>
<path d="M1851 198h8M1855 198v6" stroke="#0000ff" stroke-width="1.200"/>
<text x="1225.8" y="641" font-size="50" fill="#0000ff" font-weight="bold">Exhibition</text>
<text x="1225.6" y="691.3" font-size="31" fill="#0000ff">A:</text>
<text x="1227.3" y="735" font-size="31" fill="#0000ff">F:</text>
<text x="1243.3" y="781" font-size="31" fill="#0000ff" textLength="165" lengthAdjust="spacingAndGlyphs">13-37 13 00</text>
<text x="1784.6" y="684.5" font-size="40.8" fill="#0000ff" textLength="124.6" lengthAdjust="spacingAndGlyphs">±0.000</text>
<text transform="translate(66.9,634.7) rotate(-90)" font-size="40.5" fill="#0000ff" textLength="103" lengthAdjust="spacingAndGlyphs">3.250</text>
<text transform="translate(66.9,443.5) rotate(-90)" font-size="40.5" fill="#0000ff" textLength="104" lengthAdjust="spacingAndGlyphs">0.100</text>
<text transform="translate(288.8,662.5) rotate(-90)" font-size="65.5" fill="#0000ff" textLength="419.5" lengthAdjust="spacingAndGlyphs">West Elevation</text>
<text x="241.5" y="715.5" font-size="66" fill="#3a9ff2" textLength="132" lengthAdjust="spacingAndGlyphs">S-02</text>
<circle cx="1753.500" cy="716.500" r="15" stroke="#3399ff" stroke-width="1"/><path d="M1753.500 716.500V701.500A15 15 0 0 1 1768.500 716.500zM1753.500 716.500V731.500A15 15 0 0 1 1738.500 716.500z" fill="#3399ff"/><path d="M1722 716.500H1782.400M1753.500 686.400V746.800" stroke="#3399ff" stroke-width="1"/>
<path d="M403 737H495L449 645z" fill="#38a8e0" stroke="#22aa55" stroke-width="1.500"/><circle cx="449" cy="736" r="3.500" fill="#000"/>
<path d="M375 714.500l3.500 3.500-3.500 3.500-3.500-3.500z" fill="#c000c0"/>
</g></svg>
<div class="abs" style="left:0;top:245px;width:46px;height:20px;background:#dcdcdc;border-radius:4px"></div>
<div class="abs" style="left:0;top:901px;width:46px;height:20px;background:#dcdcdc;border-radius:4px"></div>
<div class="abs" style="left:0;top:922px;width:46px;height:20px;background:#dcdcdc;border-radius:4px"></div>
<span class="t" style="left:2.5px;top:247.0px;font-size:12px;line-height:16px;color:#111;transform:scaleX(0.9503);transform-origin:0 50%;">Design</span>
<span class="t" style="left:2.0px;top:903.0px;font-size:12px;line-height:16px;color:#111;transform:scaleX(0.9926);transform-origin:0 50%;overflow:hidden;width:45px;">Viewpoi</span>
<span class="t" style="left:2.0px;top:924.0px;font-size:12px;line-height:16px;color:#111;transform:scaleX(0.9287);transform-origin:0 50%;">Docume</span>
<svg class="abs" style="left:0;top:172px" width="47" height="720" viewBox="0 172 47 720" fill="none" stroke="#333" stroke-width="1.100" stroke-linejoin="round">
<path d="M14 177.500h18" stroke="#999"/>
<path d="M19.500 188v13l3.300-2.800 2.500 5.300 2.200-1-2.500-5.200 4.500-.3z" fill="#777" stroke="#555"/>
<rect x="14.500" y="219.500" width="18" height="13.500" stroke-dasharray="2.500 1.500"/>
<path d="M14 275.500l18-2.500v12l-18 5z"/>
<path d="M20 305v15.500c0 2 6.500 2 6.500 0v-15.500"/><ellipse cx="23.200" cy="305" rx="3.200" ry="1.800"/>
<path d="M12.500 337.500l3.500-2 17 8v4.500l-3.500 1.500-17-8zM33 343.500l-3.500 1.500v4.500M12.500 337.500l17 7.500"/>
<path d="M9.500 372l12-7.500 14.500 6-12.500 7zM15.500 368.300l4.500 2-4 2.500"/>
<path d="M9.500 402.500l8-9 13-.5 6 8.500-5.500 1.500-3.500-5-9.500 11.500z"/>
<path d="M10 426.500l11 4.500 14-8.500-4 17-10-8.500-4 8.500z"/>
<path d="M11.500 455l10-1.500 4 2.500-9.500 1.500zM16 457.500v2.500l4 2 9.500-1.500M20 462v2.500l4 2 10-2-4-2.500M24 466.500v1.500l4 1.500 7.500-3-1.500-2.500"/>
<path d="M13 499.500v-9.500l21-6v9M13 494l21-6M23.500 487v9.500"/>
<path d="M13 513.500l21-2v17l-21 3zM13 519.500l21-2.500M13 525.500l21-2.500M20 512.800v17.500M27 512v17.500"/>
<path d="M18.500 545l10-2v17.500l-10 2zM21 553.500l1.500-.5"/>
<path d="M15 575.500l16-2v14l-16 2.500zM15 582.500l16-2.500M23 574.500v14.500"/>
<path d="M11 607l14-3.500 10 7-14 4zM14 613.500l8 6 12.500-4-5-3.500"/>
<path d="M15 636l16-2v14l-16 2.500zM22.500 635v10l8.500-1.500M22.500 645l-7.500 5"/>
<path d="M13.500 664.500h5.500v2h8v-2h5.500v7h-3v4h4.500v6.500h-20.500zM19 670.500h6M19 673.500h8M19 676.500h8" stroke-width="1.200"/>
<path d="M8 697c6-2 12-3 18-2l10 8c-6-1-12 0-17 3zM14 695.500l10.500 8.500M20 695l10.500 8M12.500 700.500c6-2 12-2.500 17-1.500M16 704c5.500-2 11-2.500 16.500-1.500"/>
<path d="M15 731c0-6 4-10 9-10.500l6 3.500c-1 6 0 11 2 14l-7.500 3.500c-5-1-9-5-9.500-10.500zM24 720.500c-2 7-1.500 14 .5 21"/>
<path d="M17.500 762V750.500C17.500 748.300 22.500 748.300 22.500 750.500V761M17.500 762H28L31.500 765H21L17.500 762M17.500 762V774.500M21 765V771M31.500 765V774.500M28 765V770"/>
<circle cx="23.500" cy="788.500" r="4.800"/><path d="M21.500 793.500v3.500h4v-3.500M21 788.500l1.500-1.500 1.500 2 1.500-2 1 1.500M23.500 780v-2M17 783l-1.500-1.500M30 783l1.500-1.500M15 789.500h-2M32 789.500h2M17 796l-1.500 1.500M30 796l1.500 1.500"/>
<path d="M16 816.500l6.500-3.500 6.500 3v13.500l-6.500 3.500-6.500-3.500zM16 816.500l6.500 3 6.500-3.500M22.500 819.500v13.500M19 830.500v2M26 830.500v2"/>
<path d="M13 846.500c7-2 14-2 21 0v12c-7-2-14-2-21 0zM13 852.500c7-2 14-2 21 0M20 845.200v12M27 845.200v12"/>
<path d="M14.500 876l18-2.500v13l-18 4zM22.500 875v14"/>
</svg>
<div class="abs" style="left:47px;top:998px;width:1873px;height:19px;background:#f0f0f0"></div>
<div class="abs" style="left:0;top:1017px;width:1920px;height:1px;background:#d4d4d4"></div>
<div class="abs" style="left:0;top:1018px;width:1920px;height:22px;background:#f0f0f0"></div>
<div class="abs" style="left:118px;top:998px;width:1px;height:19px;background:#8a8a8a"></div>
<div class="abs" style="left:299px;top:998px;width:1px;height:19px;background:#8a8a8a"></div>
<div class="abs" style="left:480px;top:998px;width:1px;height:19px;background:#8a8a8a"></div>
<div class="abs" style="left:661px;top:998px;width:1px;height:19px;background:#8a8a8a"></div>
<div class="abs" style="left:842px;top:998px;width:1px;height:19px;background:#8a8a8a"></div>
<div class="abs" style="left:1022px;top:998px;width:1px;height:19px;background:#8a8a8a"></div>
<div class="abs" style="left:1202px;top:998px;width:1px;height:19px;background:#8a8a8a"></div>
<div class="abs" style="left:1382px;top:998px;width:1px;height:19px;background:#8a8a8a"></div>
<div class="abs" style="left:1562px;top:998px;width:1px;height:19px;background:#8a8a8a"></div>
<div class="abs" style="left:1742px;top:998px;width:1px;height:19px;background:#8a8a8a"></div>
<span class="t" style="left:203.4px;top:1000.5px;font-size:11.5px;line-height:15.5px;color:#111;transform:scaleX(0.9316);transform-origin:0 50%;">481%</span>
<span class="t" style="left:385.7px;top:1000.5px;font-size:11.5px;line-height:15.5px;color:#111;transform:scaleX(0.9377);transform-origin:0 50%;">0.00°</span>
<span class="t" style="left:566.0px;top:1000.5px;font-size:11.5px;line-height:15.5px;color:#111;transform:scaleX(0.9382);transform-origin:0 50%;">1:100</span>
<span class="t" style="left:710.8px;top:1000.5px;font-size:11.5px;line-height:15.5px;color:#111;transform:scaleX(0.9827);transform-origin:0 50%;">04 Plans - Approval</span>
<span class="t" style="left:908.0px;top:1000.5px;font-size:11.5px;line-height:15.5px;color:#111;transform:scaleX(1.0223);transform-origin:0 50%;">Entire Model</span>
<span class="t" style="left:1070.0px;top:1000.5px;font-size:11.5px;line-height:15.5px;color:#111;transform:scaleX(0.9936);transform-origin:0 50%;">03 Architectural 100</span>
<span class="t" style="left:1255.8px;top:1000.5px;font-size:11.5px;line-height:15.5px;color:#111;transform:scaleX(1.0037);transform-origin:0 50%;">03 Building Plans</span>
<span class="t" style="left:1812.0px;top:1000.5px;font-size:11.5px;line-height:15.5px;color:#111;transform:scaleX(0.9972);transform-origin:0 50%;">Plain Meter</span>
<span class="t" style="left:1640.0px;top:1000.5px;font-size:11.5px;line-height:15.5px;color:#111;transform:scaleX(0.9772);transform-origin:0 50%;">01 Site Plan</span>
<span class="t" style="left:1782.7px;top:1020.5px;font-size:13px;line-height:17px;color:#444;transform:scaleX(0.8993);transform-origin:0 50%;">GRAPHISOFT</span>
<span class="t" style="left:1863.0px;top:1020.5px;font-size:13px;line-height:17px;color:#999;transform:scaleX(1.4077);transform-origin:0 50%;">ID</span>
<div class="abs" style="left:1766px;top:1020px;width:1px;height:19px;background:#d0d0d0"></div><div class="abs" style="left:1896px;top:1020px;width:1px;height:19px;background:#d0d0d0"></div>
<svg class="abs" style="left:0;top:998px" width="1920" height="42" viewBox="0 998 1920 42" fill="none" stroke="#333" stroke-width="1.100">
<path d="M287 1003.500l4.500 4-4.500 4z" fill="#222" stroke="none"/>
<path d="M468.3 1003.500l4.500 4-4.500 4z" fill="#222" stroke="none"/>
<path d="M649.7 1003.500l4.500 4-4.500 4z" fill="#222" stroke="none"/>
<path d="M830.5 1003.500l4.500 4-4.500 4z" fill="#222" stroke="none"/>
<path d="M1011 1003.500l4.500 4-4.500 4z" fill="#222" stroke="none"/>
<path d="M1191 1003.500l4.500 4-4.500 4z" fill="#222" stroke="none"/>
<path d="M1370.5 1003.500l4.500 4-4.500 4z" fill="#222" stroke="none"/>
<path d="M1730.6 1003.500l4.500 4-4.500 4z" fill="#222" stroke="none"/>
<path d="M1910 1003.500l4.500 4-4.500 4z" fill="#222" stroke="none"/>
<circle cx="60" cy="1006.500" r="5"/><path d="M56.500 1010.500l-5 4.500M50.500 1006.500h7M53 1004l-2.500 2.500 2.500 2.500"/>
<g stroke="#bdbdbd"><circle cx="79" cy="1006.500" r="5"/><path d="M82.500 1010.500l5 4.500M81.500 1006.500h7M86 1004l2.500 2.500-2.500 2.500"/></g>
<circle cx="103" cy="1006.500" r="5.200"/><path d="M106.500 1010.500l5 4.500M103 1004v5M100.500 1006.500h5"/>
<circle cx="131" cy="1006.500" r="5.400"/><path d="M134.500 1010.500l5 4.500M131 1003v2.200M131 1008v2.200M127.500 1006.500h2.200M132.500 1006.500h2.200"/>
<path d="M307 1007l5-5.500 4.500 4-5 5.500zM317.500 1012.500v-5l-2 2M317.500 1007.500l2 2"/>
<path d="M487.500 1003.500h14v7h-14zM491 1010.500v-2.500M494.500 1010.500v-3.500M498 1010.500v-2.500"/>
<path d="M670.500 1003.500l12-1.500-2 3-12 1.500zM670.500 1007l12-1.500-2 3-12 1.500zM670.500 1010.500l12-1.500-2 3-12 1.500z"/>
<path d="M850.500 1003.500h12.500v8.500h-12.500zM850.500 1005.500h12.500M852.500 1012l4-4.500M856.500 1012l4-4.500M860.500 1012l2.500-3"/>
<path d="M1034 1002v7.500c0 2 5 2 5 0v-7.500M1036.500 1011v4"/>
<path d="M1209.500 1003.500h14v9h-14zM1212.500 1006h8v4h-8z"/>
<path d="M1390.500 1004.500h6M1390.500 1004.500v6h5M1399.500 1002.500l3 2.500-3 2.500M1396.500 1005h6M1397.500 1009.500h5v5h-5z"/>
<path d="M1750 1002.500v3M1763 1002.500v3M1750 1004h13M1750.500 1008h12v6h-12z"/>
<path d="M1750.500 1023.500h11.500v8M1747 1026.500h11.500v8.500h-11.500z" stroke-width="1.300"/>
</svg>
<div class="abs" style="left:512px;top:412px;width:290px;height:434px;box-sizing:border-box;background:#fff;border:1px solid #1883d7;box-shadow:0 6px 18px rgba(0,0,0,.28),0 0 6px rgba(0,0,0,.12)"></div>
<div class="abs" style="left:513px;top:443px;width:288px;height:5px;background:#f0f0f0"></div>
<div class="abs" style="left:513px;top:813px;width:288px;height:32px;background:#f0f0f0"></div>
<div class="abs" style="left:513px;top:588px;width:288px;height:20px;background:#cce8ff"></div>
<span class="t" style="left:542.0px;top:419.6px;font-size:12px;line-height:16px;color:#000;transform:scaleX(0.9556);transform-origin:0 50%;">Select view</span>
<span class="t" style="left:552.5px;top:450.2px;font-size:12px;line-height:16px;color:#666;transform:scaleX(0.9084);transform-origin:0 50%;">Training Series 3</span>
<span class="t" style="left:562.8px;top:470.2px;font-size:12px;line-height:16px;color:#666;transform:scaleX(0.8850);transform-origin:0 50%;">Site</span>
<span class="t" style="left:562.8px;top:490.2px;font-size:12px;line-height:16px;color:#666;transform:scaleX(0.9227);transform-origin:0 50%;">Floor Plans</span>
<span class="t" style="left:562.8px;top:510.2px;font-size:12px;line-height:16px;color:#666;transform:scaleX(0.9252);transform-origin:0 50%;">Ceiling Plans</span>
<span class="t" style="left:562.8px;top:530.2px;font-size:12px;line-height:16px;color:#666;transform:scaleX(0.9544);transform-origin:0 50%;">Interior – CineRender</span>
<span class="t" style="left:562.8px;top:550.2px;font-size:12px;line-height:16px;color:#666;transform:scaleX(0.9125);transform-origin:0 50%;">Sections</span>
<span class="t" style="left:572.7px;top:570.2px;font-size:12px;line-height:16px;color:#666;transform:scaleX(0.9526);transform-origin:0 50%;">S-01 Building Section</span>
<span class="t" style="left:572.7px;top:590.2px;font-size:12px;line-height:16px;color:#000;transform:scaleX(0.9526);transform-origin:0 50%;">S-02 Building Section</span>
<span class="t" style="left:562.8px;top:610.2px;font-size:12px;line-height:16px;color:#666;transform:scaleX(0.9211);transform-origin:0 50%;">Elevations</span>
<span class="t" style="left:562.8px;top:630.2px;font-size:12px;line-height:16px;color:#666;transform:scaleX(0.9578);transform-origin:0 50%;">Interior Elevations</span>
<span class="t" style="left:562.8px;top:650.2px;font-size:12px;line-height:16px;color:#666;transform:scaleX(0.9503);transform-origin:0 50%;">Worksheets</span>
<span class="t" style="left:562.8px;top:670.2px;font-size:12px;line-height:16px;color:#666;transform:scaleX(0.9215);transform-origin:0 50%;">Details</span>
<span class="t" style="left:562.8px;top:690.2px;font-size:12px;line-height:16px;color:#666;transform:scaleX(0.9369);transform-origin:0 50%;">3D Renderings</span>
<span class="t" style="left:562.8px;top:710.2px;font-size:12px;line-height:16px;color:#666;transform:scaleX(0.9299);transform-origin:0 50%;">3D Documents</span>
<span class="t" style="left:562.8px;top:730.2px;font-size:12px;line-height:16px;color:#666;transform:scaleX(0.9107);transform-origin:0 50%;">Generic Perspective</span>
<span class="t" style="left:562.8px;top:750.2px;font-size:12px;line-height:16px;color:#666;transform:scaleX(0.9669);transform-origin:0 50%;">Frontal Axonometry</span>
<span class="t" style="left:562.8px;top:770.2px;font-size:12px;line-height:16px;color:#666;transform:scaleX(0.7863);transform-origin:0 50%;">IFC</span>
<span class="t" style="left:562.8px;top:790.2px;font-size:12px;line-height:16px;color:#666;transform:scaleX(0.9041);transform-origin:0 50%;">Indexes</span>
<div class="abs" style="left:519px;top:818px;width:118px;height:21px;box-sizing:border-box;background:#e1e1e1;border:1px solid #adadad"></div>
<div class="abs" style="left:677px;top:818px;width:118px;height:21px;box-sizing:border-box;background:#e1e1e1;border:2px solid #0078d7"></div>
<span class="t" style="left:561.5px;top:820.5px;font-size:12px;line-height:16px;color:#000;transform:scaleX(0.8968);transform-origin:0 50%;">Cancel</span>
<span class="t" style="left:728.5px;top:820.5px;font-size:12px;line-height:16px;color:#000;transform:scaleX(0.8651);transform-origin:0 50%;">OK</span>
<svg class="abs" style="left:512px;top:412px" width="290" height="434" viewBox="512 412 290 434" fill="none">
<defs><radialGradient id="lg2" cx="35%" cy="30%" r="80%"><stop offset="0" stop-color="#6f8fe0"/><stop offset="1" stop-color="#1f3aa8"/></radialGradient></defs>
<circle cx="529.200" cy="427.600" r="7.600" fill="url(#lg2)"/><path d="M522.400 430.100C524.200 425.100 529.200 422.600 533.800 425.800L532.800 427.200C529.700 425.200 526.400 427 525.200 431.800Z" fill="#fff"/><circle cx="532.800" cy="428.800" r=".9" fill="#fff"/>
<path d="M773.500 422.500l9.500 9.500M783 422.500l-9.500 9.500" stroke="#111" stroke-width="1.200"/>
<path d="M730.500 424.500c.3-3 5-3 5 0 0 2-2.500 2.200-2.500 4.500M733 431v1.800" stroke="#111" stroke-width="1.500"/>
<path d="M519.2 456.2l4 4 4-4" stroke="#4a4a4a" stroke-width="1.400"/>
<path d="M533.500 464v-8l4-3.500 4 3.500v3M541.500 456l3 .5v8M541.500 460.500h5.500v6.500h-5.500z" stroke="#a6c8f2" stroke-width="1.100"/>
<path d="M542.5 484.7v-13h6v4.500h9.500v8.500z" stroke="#a6c8f2" stroke-width="1.100"/>
<path d="M531.2 494.2l4 4-4 4" stroke="#888" stroke-width="1.500"/>
<path d="M542.5 504.7v-13h6v4.500h9.500v8.500z" stroke="#a6c8f2" stroke-width="1.100"/>
<path d="M543.500 494.2h3v2.500" stroke="#a6c8f2"/>
<path d="M542.5 500.7h3v-1.500l2.500 2.500-2.500 2.500v-1.500h-1.500v2.500h-1.500z" fill="#777"/>
<path d="M531.2 514.2l4 4-4 4" stroke="#888" stroke-width="1.500"/>
<path d="M542.5 524.7v-13h6v4.500h9.500v8.500z" stroke="#a6c8f2" stroke-width="1.100"/>
<path d="M543.500 514.2h3v2.500" stroke="#a6c8f2"/>
<path d="M542.5 520.7h3v-1.500l2.500 2.500-2.500 2.500v-1.500h-1.500v2.500h-1.500z" fill="#777"/>
<path d="M543 533.2l9.500-1.500 4.500 1.500v10.500l-4.500 2-9.500-2zM552.5 531.7v13.500" stroke="#a6c8f2" stroke-width="1.100"/>
<path d="M529.2 556.2l4 4 4-4" stroke="#4a4a4a" stroke-width="1.400"/>
<path d="M542.5 564.2v-7.500l7.500-3.500 7.500 3.500v7.500zM542.5 556.7h15" stroke="#a6c8f2" stroke-width="1.1"/>
<path d="M542.5 560.7h3v-1.500l2.500 2.500-2.500 2.500v-1.500h-1.500v2.500h-1.500z" fill="#777"/>
<path d="M552.9 584.2v-7.500l7.500-3.500 7.500 3.500v7.500zM552.9 576.7h15" stroke="#a6c8f2" stroke-width="1.1"/>
<path d="M552.9 604.2v-7.500l7.500-3.500 7.500 3.500v7.500zM552.9 596.7h15" stroke="#2f7fe6" stroke-width="1.3"/>
<path d="M531.2 614.2l4 4-4 4" stroke="#888" stroke-width="1.500"/>
<path d="M542.500 624.2v-8l7.500-3.500 7.500 3.500v8z" stroke="#a6c8f2" stroke-width="1.100"/>
<path d="M542.5 620.7h3v-1.500l2.500 2.500-2.500 2.500v-1.500h-1.500v2.500h-1.500z" fill="#777"/>
<path d="M542.500 631.7h15v13h-15zM546 634.7h3v3h-3zM551.500 634.7h3v3h-3z" stroke="#a6c8f2" stroke-width="1.100"/>
<path d="M542.5 640.7h3v-1.500l2.500 2.500-2.500 2.500v-1.500h-1.500v2.500h-1.500z" fill="#777"/>
<path d="M531.2 654.2l4 4-4 4" stroke="#888" stroke-width="1.500"/>
<path d="M542.500 664.2v-12h10.500l4 4v8zM546 659.2l6-5M549 661.2h6" stroke="#a6c8f2" stroke-width="1.100"/>
<path d="M542.5 660.7h3v-1.500l2.500 2.500-2.500 2.500v-1.500h-1.500v2.500h-1.500z" fill="#777"/>
<path d="M531.2 674.2l4 4-4 4" stroke="#888" stroke-width="1.500"/>
<circle cx="550" cy="678.2" r="7" stroke="#a6c8f2" stroke-width="1.100"/><path d="M550 671.2v14M543 678.2h14" stroke="#a6c8f2" stroke-width="1.100"/>
<path d="M542.5 680.7h3v-1.500l2.500 2.500-2.500 2.500v-1.500h-1.500v2.500h-1.500z" fill="#777"/>
<path d="M531.2 694.2l4 4-4 4" stroke="#888" stroke-width="1.500"/>
<path d="M542.5 704.2v-11.500h5.500l1.500 2h8.500v9.500z" stroke="#8a8a8a" stroke-width="1" fill="#f6f6f6"/>
<path d="M531.2 714.2l4 4-4 4" stroke="#888" stroke-width="1.500"/>
<path d="M542.500 724.2v-11h11l3.500 3.500v7.500zM545.500 716.2h6v6h-6zM547.500 716.2v-2h6v6h-2" stroke="#a6c8f2" stroke-width="1.100"/>
<path d="M542.5 720.7h3v-1.500l2.500 2.500-2.500 2.500v-1.500h-1.500v2.500h-1.500z" fill="#777"/>
<path d="M543 733.2l9.500-1.500 4.500 1.500v10.500l-4.500 2-9.500-2zM552.5 731.7v13.500" stroke="#a6c8f2" stroke-width="1.100"/>
<path d="M543.500 755.2l3.500-3.500h9.500v10l-3.500 3.500h-9.500zM543.500 755.2h9.500v10M553 755.2l3.500-3.500" stroke="#a6c8f2" stroke-width="1.100"/>
<path d="M531.2 774.2l4 4-4 4" stroke="#888" stroke-width="1.500"/>
<path d="M542.5 784.2v-11.500h5.500l1.500 2h8.500v9.500z" stroke="#8a8a8a" stroke-width="1" fill="#f6f6f6"/>
<path d="M531.2 794.2l4 4-4 4" stroke="#888" stroke-width="1.500"/>
<path d="M542.5 804.2v-11.500h5.500l1.500 2h8.500v9.500z" stroke="#8a8a8a" stroke-width="1" fill="#f6f6f6"/>
<path d="M797 839.500h2M797 842.500h2M794 842.500h2M791 842.500h2" stroke="#b0b0b0" stroke-width="1.500"/>
</svg>
<div class="abs" style="left:1420px;top:490px;width:265px;height:560px;box-sizing:border-box;background:#f0f0f0;border:1px solid #a8a8a8;box-shadow:3px 3px 5px rgba(0,0,0,.35)"></div>
<div class="abs" style="left:1679px;top:569px;width:178px;height:85px;box-sizing:border-box;background:#f0f0f0;border:1px solid #a8a8a8;box-shadow:3px 3px 5px rgba(0,0,0,.35)"></div>
<div class="abs" style="left:1423px;top:573px;width:257px;height:24px;box-sizing:border-box;background:#a8d0fb;border:1px solid #4d97e6"></div>
<span class="t" style="left:1452.3px;top:499.0px;font-size:12px;line-height:16px;color:#000;transform:scaleX(0.9654);transform-origin:0 50%;">Section Selection Settings</span>
<span class="t" style="left:1631.6px;top:499.0px;font-size:12px;line-height:16px;color:#000;transform:scaleX(1.0000);transform-origin:0 50%;">Ctrl+T</span>
<span class="t" style="left:1452.3px;top:524.0px;font-size:12px;line-height:16px;color:#000;transform:scaleX(1.0036);transform-origin:0 50%;"><u>S</u>elect &amp; Activate Tool</span>
<span class="t" style="left:1452.3px;top:552.7px;font-size:12px;line-height:16px;color:#000;transform:scaleX(0.9850);transform-origin:0 50%;">Open with Current View Settings</span>
<span class="t" style="left:1452.3px;top:577.6px;font-size:12px;line-height:16px;color:#000;transform:scaleX(0.9832);transform-origin:0 50%;"><u>V</u>iews from this Section</span>
<span class="t" style="left:1452.3px;top:602.8px;font-size:12px;line-height:16px;color:#000;transform:scaleX(0.9314);transform-origin:0 50%;">Show as Trace Reference</span>
<span class="t" style="left:1452.3px;top:631.8px;font-size:12px;line-height:16px;color:#000;transform:scaleX(1.0014);transform-origin:0 50%;"><u>C</u>ut</span>
<span class="t" style="left:1631.6px;top:631.8px;font-size:12px;line-height:16px;color:#000;transform:scaleX(0.9800);transform-origin:0 50%;">Ctrl+X</span>
<span class="t" style="left:1452.3px;top:657.0px;font-size:12px;line-height:16px;color:#000;transform:scaleX(0.9852);transform-origin:0 50%;">Copy</span>
<span class="t" style="left:1630.0px;top:657.0px;font-size:12px;line-height:16px;color:#000;transform:scaleX(1.0077);transform-origin:0 50%;">Ctrl+C</span>
<span class="t" style="left:1452.3px;top:682.0px;font-size:12px;line-height:16px;color:#000;transform:scaleX(0.8994);transform-origin:0 50%;">Paste</span>
<span class="t" style="left:1631.6px;top:682.0px;font-size:12px;line-height:16px;color:#000;transform:scaleX(0.9800);transform-origin:0 50%;">Ctrl+V</span>
<span class="t" style="left:1452.3px;top:706.8px;font-size:12px;line-height:16px;color:#000;transform:scaleX(0.9427);transform-origin:0 50%;">Delete</span>
<span class="t" style="left:1452.3px;top:735.5px;font-size:12px;line-height:16px;color:#000;transform:scaleX(1.0121);transform-origin:0 50%;">Move</span>
<span class="t" style="left:1452.3px;top:764.7px;font-size:12px;line-height:16px;color:#000;transform:scaleX(0.9679);transform-origin:0 50%;">Display Order</span>
<span class="t" style="left:1452.3px;top:794.0px;font-size:12px;line-height:16px;color:#000;transform:scaleX(0.9023);transform-origin:0 50%;"><u>L</u>ayers</span>
<span class="t" style="left:1452.3px;top:823.0px;font-size:12px;line-height:16px;color:#000;transform:scaleX(0.9934);transform-origin:0 50%;">Connect</span>
<span class="t" style="left:1452.3px;top:851.7px;font-size:12px;line-height:16px;color:#000;transform:scaleX(0.9678);transform-origin:0 50%;">Add to New Issue...</span>
<span class="t" style="left:1452.3px;top:880.7px;font-size:12px;line-height:16px;color:#000;transform:scaleX(0.9814);transform-origin:0 50%;">Show Selection/Marquee in 3D</span>
<span class="t" style="left:1653.2px;top:880.7px;font-size:12px;line-height:16px;color:#000;transform:scaleX(0.8140);transform-origin:0 50%;">F5</span>
<span class="t" style="left:1452.3px;top:905.6px;font-size:12px;line-height:16px;color:#000;transform:scaleX(0.9693);transform-origin:0 50%;">Show All in 3D</span>
<span class="t" style="left:1626.0px;top:905.6px;font-size:12px;line-height:16px;color:#000;transform:scaleX(0.9729);transform-origin:0 50%;">Ctrl+F5</span>
<span class="t" style="left:1452.3px;top:930.8px;font-size:12px;line-height:16px;color:#000;transform:scaleX(0.9742);transform-origin:0 50%;">Show Stored Selection/Marquee in 3D</span>
<span class="t" style="left:1452.3px;top:960.0px;font-size:12px;line-height:16px;color:#000;transform:scaleX(0.9700);transform-origin:0 50%;">Crop <u>Z</u>one...</span>
<span class="t" style="left:1452.3px;top:989.0px;font-size:12px;line-height:16px;color:#000;transform:scaleX(0.9926);transform-origin:0 50%;"><u>Z</u>oom to Selection</span>
<span class="t" style="left:1603.0px;top:989.0px;font-size:12px;line-height:16px;color:#000;transform:scaleX(1.0342);transform-origin:0 50%;">Ctrl+Shift+'</span>
<span class="t" style="left:1452.3px;top:1018.0px;font-size:12px;line-height:16px;color:#000;transform:scaleX(0.9681);transform-origin:0 50%;"><u>D</u>eselect All</span>
<div class="abs" style="left:1450px;top:544px;width:231px;height:1px;background:#a0a0a0"></div>
<div class="abs" style="left:1450px;top:624px;width:231px;height:1px;background:#a0a0a0"></div>
<div class="abs" style="left:1450px;top:727px;width:231px;height:1px;background:#a0a0a0"></div>
<div class="abs" style="left:1450px;top:756px;width:231px;height:1px;background:#a0a0a0"></div>
<div class="abs" style="left:1450px;top:786px;width:231px;height:1px;background:#a0a0a0"></div>
<div class="abs" style="left:1450px;top:815px;width:231px;height:1px;background:#a0a0a0"></div>
<div class="abs" style="left:1450px;top:843px;width:231px;height:1px;background:#a0a0a0"></div>
<div class="abs" style="left:1450px;top:872px;width:231px;height:1px;background:#a0a0a0"></div>
<div class="abs" style="left:1450px;top:952px;width:231px;height:1px;background:#a0a0a0"></div>
<div class="abs" style="left:1450px;top:980px;width:231px;height:1px;background:#a0a0a0"></div>
<div class="abs" style="left:1450px;top:1010px;width:231px;height:1px;background:#a0a0a0"></div>
<div class="abs" style="left:1709px;top:623px;width:144px;height:1px;background:#a0a0a0"></div>
<span class="t" style="left:1711.0px;top:577.6px;font-size:12px;line-height:16px;color:#000;transform:scaleX(0.9717);transform-origin:0 50%;">S-02 Building Section</span>
<span class="t" style="left:1711.0px;top:602.8px;font-size:12px;line-height:16px;color:#000;transform:scaleX(0.9717);transform-origin:0 50%;">S-02 Building Section</span>
<span class="t" style="left:1711.0px;top:631.8px;font-size:12px;line-height:16px;color:#000;transform:scaleX(0.9451);transform-origin:0 50%;">All Related Views...</span>
<svg class="abs" style="left:1421px;top:491px" width="440" height="549" viewBox="1421 491 440 549" fill="none">
<path d="M1673.500 582.1l3.500 3.500-3.500 3.500z" fill="#111"/>
<path d="M1673.500 740l3.500 3.500-3.500 3.500z" fill="#111"/>
<path d="M1673.500 769.2l3.500 3.500-3.500 3.500z" fill="#111"/>
<path d="M1673.500 798.5l3.500 3.500-3.500 3.500z" fill="#111"/>
<path d="M1673.500 827.5l3.500 3.500-3.500 3.500z" fill="#111"/>
<path d="M1429.500 500.500h-3v4M1426.500 511v3.500h17v-14h-3" stroke="#2f7fe6" stroke-width="1.300"/>
<path d="M1433.800 502.300l-6.600 6.200" stroke="#333" stroke-width="3"/><path d="M1433.600 502.500l-6.200 5.800" stroke="#f0f0f0" stroke-width=".9"/>
<path d="M1430.200 497.600l5.200-.4 4.300 4.200-3.100 3.100-3.600-3.500z" fill="#f0f0f0" stroke="#333" stroke-width="1.200" stroke-linejoin="round"/>
<path d="M1430 632l7.500 11.500M1441 632l-7.500 11.500" stroke="#333" stroke-width="1.100"/><circle cx="1431" cy="645" r="2.200" stroke="#333" stroke-width="1.100"/><circle cx="1440" cy="645" r="2.200" stroke="#333" stroke-width="1.100"/>
<path d="M1426.500 655.500h5l2.500 2.500v9.500h-7.500z" stroke="#aaa" stroke-width="1"/><path d="M1428 660h3M1428 662.500h3.500M1428 665h3.500" stroke="#bbb" stroke-width="1"/><path d="M1432.500 660.500h6l3.500 3.500v9h-9.500zM1438.500 660.500v3.500h3.500M1435 665.500h3M1435 667.800h5M1435 670h5" stroke="#333" stroke-width="1.100" fill="#f0f0f0"/>
<path d="M1434 697.500h-7.500v-12.500h13.500v4M1430 685v-2.500h7v2.500M1431.500 682.500v-1.500h4v1.500" stroke="#333" stroke-width="1.200"/><rect x="1434.800" y="690.300" width="8.400" height="7" rx="1.200" fill="#e9f1fc" stroke="#2f7fe6" stroke-width="1.300"/><path d="M1436.800 692.700h4.500M1436.800 695h4.500" stroke="#2f7fe6" stroke-width="1.100"/>
<path d="M1429.300 707.200l11.500 12.300M1440.800 707.200l-11.500 12.300" stroke="#ee4422" stroke-width="1.600"/>
<path d="M1429.500 826.500h9.500M1429.500 836.500h9.500M1428.500 827.500v8M1440.500 827.500v8" stroke="#333" stroke-width="1.200"/><rect x="1426.500" y="824.500" width="3.500" height="3.500" stroke="#333"/><rect x="1426.500" y="834" width="3.500" height="3.500" stroke="#333"/><circle cx="1440.500" cy="826.200" r="2" stroke="#2f7fe6"/><circle cx="1440.500" cy="836" r="2" stroke="#2f7fe6"/>
<path d="M1428.500 866.500v-15h9l-2 2.500M1428.500 858h5" stroke="#333" stroke-width="1.200"/><circle cx="1437.500" cy="862.500" r="5" stroke="#2f7fe6" stroke-width="1.200"/><path d="M1437.500 859.500v6M1434.500 862.500h6" stroke="#2f7fe6" stroke-width="1.200"/>
<rect x="1426.500" y="880" width="17" height="17" stroke="#333" stroke-dasharray="2.500 1.500"/>
<path d="M1429.5 886.5h8v8h-8zM1429.5 886.5l3-3h8l-3 3M1440.5 883.5v8l-3 3" stroke="#333" stroke-width="1.100"/>
<path d="M1429 910h8v8h-8zM1429 910l3-3h8l-3 3M1440 907v8l-3 3" stroke="#333" stroke-width="1.100"/>
<rect x="1426.500" y="930" width="17" height="17" stroke="#333" stroke-dasharray="2.500 1.500"/>
<path d="M1429.5 936.5h8v8h-8zM1429.5 936.5l3-3h8l-3 3M1440.5 933.5v8l-3 3" stroke="#333" stroke-width="1.100"/>
<path d="M1438 933.500l3-2.500v5" stroke="#333" stroke-width="1.100"/>
<path d="M1429.500 963l7-4 6 2.500v9l-6 4-7-3z" stroke="#bbb" stroke-width="1.100"/><path d="M1429.500 968.500l6-3 7 3-6.500 4z" stroke="#2f7fe6" stroke-width="1.200" fill="#dbe9fb"/><path d="M1436 972.500v3.500M1429.500 968.500v4l6.500 3.500 6.500-4v-3.500" stroke="#333" stroke-width="1.100"/>
<circle cx="1433.500" cy="995" r="6.500" stroke="#333" stroke-width="1.200"/><path d="M1438.500 1000l5 5" stroke="#333" stroke-width="1.300"/><path d="M1430.500 993.500l5-2.500 1.500 6.500zM1433.500 995l-3-1.500M1433.500 995l2-4M1433.500 995l3.500 2.500" stroke="#333" stroke-width="1.100"/>
<path d="M1631.500 587.500v16.500l3.800-3.600 2.700 6.200 2.400-1.100-2.700-6 5.200-.2z" fill="#fff" stroke="#000" stroke-width="1"/>
</svg>
</body></html>
